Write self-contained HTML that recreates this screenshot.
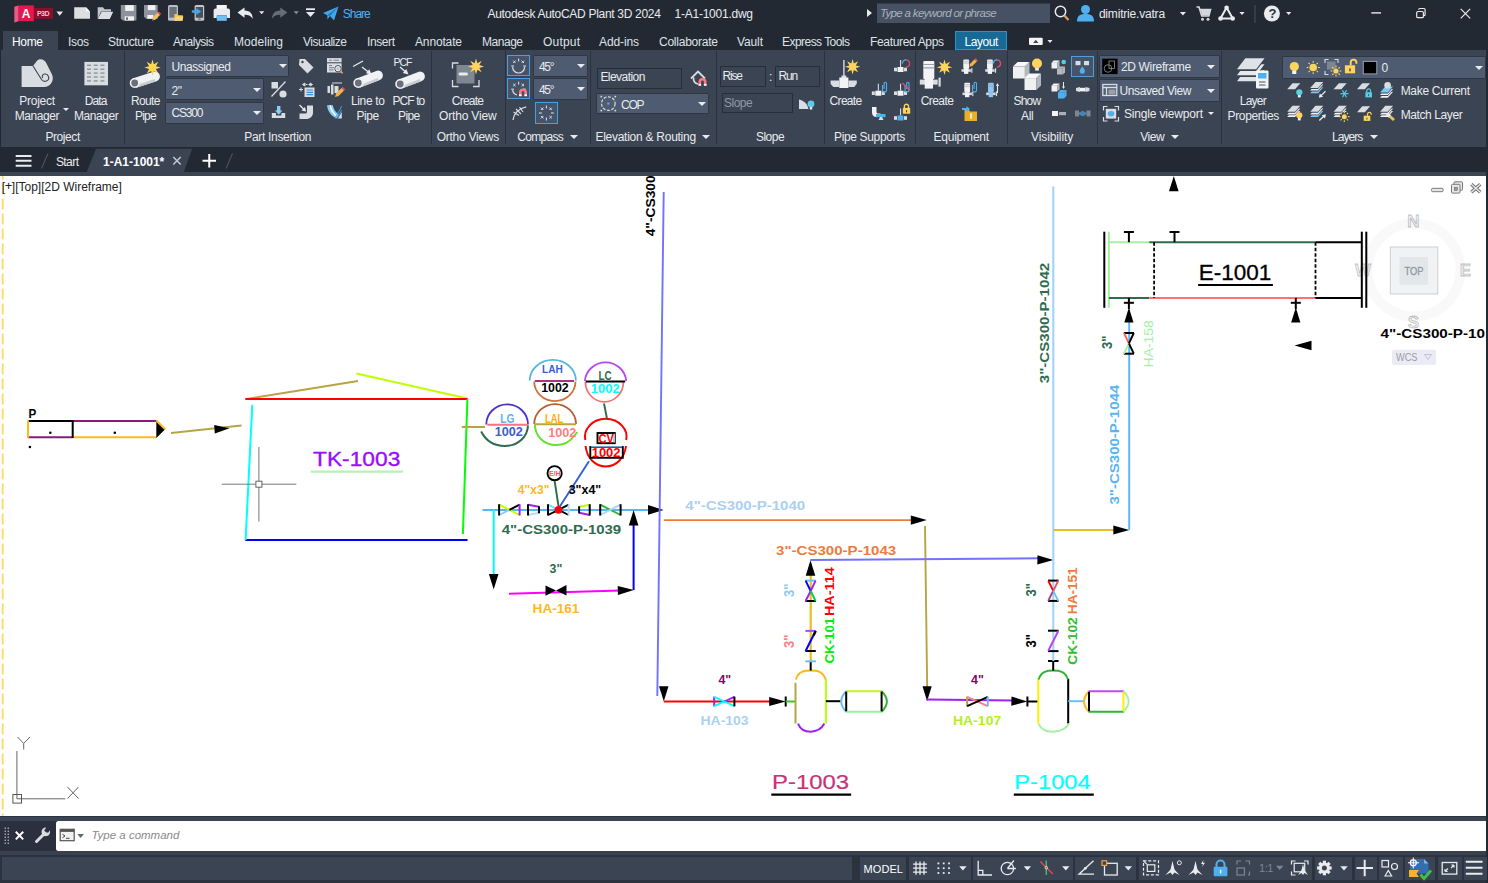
<!DOCTYPE html>
<html lang="en"><head><meta charset="utf-8"><title>Autodesk AutoCAD Plant 3D 2024 - 1-A1-1001.dwg</title>
<style>
*{box-sizing:border-box;margin:0;padding:0}
html,body{width:1488px;height:883px;overflow:hidden;background:#222933}
body{position:relative;font-family:"Liberation Sans",sans-serif;font-size:12px;color:#e9ebee}
.t{position:absolute;white-space:pre;line-height:1}
.a{position:absolute}
svg{position:absolute;overflow:visible}
.titlebar{left:0;top:0;width:1488px;height:30px;background:#222933}
.menubar{left:0;top:30px;width:1488px;height:20px;background:#222933}
.hometab{left:3px;top:31px;width:55px;height:20px;background:#3b4453}
.layouttab{left:955px;top:31px;width:52px;height:19px;background:#166a95;border:1px solid #2b93c8}
.ribbon{left:1px;top:50px;width:1485.300px;height:96.500px;background:#3b4453}
.sep{position:absolute;top:51px;width:1px;height:93px;background:#2a313d}
.dd{position:absolute;background:#4e5b71;border:1px solid #2f3744;border-radius:1px}
.inp{position:absolute;background:#3b4453;border:1px solid #272e39}
.tog{position:absolute;background:#46546a;border:1px solid #4b9fdc}
.arr{position:absolute;width:0;height:0;border-left:4px solid transparent;border-right:4px solid transparent;border-top:4.700px solid #e9ebee}
.arrs{position:absolute;width:0;height:0;border-left:3px solid transparent;border-right:3px solid transparent;border-top:3.5px solid #e9ebee}
.filetabs{left:0;top:146px;width:1488px;height:26px;background:#222933}
.band{left:0;top:172.300px;width:1486.400px;height:3.500px;background:#3b4453}
.canvas{left:0;top:176px;width:1486px;height:640px;background:#fff;overflow:hidden}
.below{left:0;top:816px;width:1486.400px;height:5px;background:#3b4453;border-top:1.500px solid #2b3340}
.cmdleft{left:0;top:820.500px;width:56px;height:30.700px;background:#2a303d}
.cmd{left:55.800px;top:821px;width:1430.600px;height:29.600px;background:#fff;border-radius:2.500px 0 0 2.500px}
.statusbg{left:0;top:851px;width:1486.400px;height:32px;background:#2c333f;border-top:4.500px solid #39414f}
.sb{position:absolute;top:857px;height:23.300px;background:#3b4453}

</style></head>
<body>
<div class="a titlebar">
<svg width="1488" height="30" viewBox="0 0 1488 30">
<path d="M18.500 5.400 H33.900 V21.200 H18.500Z" fill="#e5174d"/><path d="M14.300 6.800 L18.500 5.400 V21.200 L14.300 22.600Z" fill="#ea5a84"/>
<rect x="33.900" y="7.900" width="19.100" height="10.900" fill="#8a0f2d"/>
<path d="M59.700 15.700 l-3.300 -4.200 h6.600z" fill="#e9ebee"/>
<path d="M74.200 7.300 h11.800 l4 4.200 V18.800 H74.200Z" fill="#dcdee1"/><path d="M86 7.300 v4.200 h4Z" fill="#f4f5f6"/>
<path d="M97.700 7.200 h5.300 l1.500 2 h6.500 v2.300 H101 l-3.300 7.500Z" fill="#c3c7cd"/><path d="M101.600 11.800 H113.200 L109.800 19 H97.800Z" fill="#dcdee1"/>
<path d="M120.800 5.100 h15.600 V20.600 h-13.600 l-2 -2Z" fill="#8e939b"/><rect x="125.200" y="5.100" width="8.600" height="5.800" fill="#f1f2f4"/><rect x="124.700" y="16.300" width="9.300" height="4.300" fill="#f1f2f4"/><rect x="126" y="17.300" width="2" height="2.600" fill="#6b727d"/>
<path d="M144 5.100 h13.700 V18.800 h-11.700 l-2 -2Z" fill="#8e939b"/><rect x="147.800" y="5.100" width="7.600" height="5" fill="#f1f2f4"/><rect x="147.300" y="15" width="6" height="3.800" fill="#f1f2f4"/><path d="M152 20.600 l.9 -3.300 4.800 -4.800 2.400 2.400 -4.800 4.800z" fill="#f0c060"/><path d="M157.700 12.500 l1.100 -1.100 2.400 2.400 -1.100 1.100z" fill="#e8485c"/><path d="M152 20.600 l.5 -1.800 1.300 1.300z" fill="#555"/>
<rect x="168" y="5" width="10" height="15.800" rx="1.500" fill="#b9bdc4"/><rect x="169.300" y="7" width="7.400" height="10.600" fill="#6b717b"/><path d="M174.300 14 h3.200 l1 1.200 h4.300 v5.600 h-8.500z" fill="#f3c153"/><path d="M175.600 16.600 h7.800 l-1.200 4.200 h-7.900z" fill="#f7d37c"/>
<rect x="194.600" y="5" width="9.600" height="15.800" rx="1.500" fill="#c3c7cd"/><rect x="195.800" y="7" width="7.200" height="10.800" fill="#4a505b"/><rect x="198.200" y="18.600" width="2.400" height="1" fill="#4a505b"/><path d="M191.800 10.200 h4.700 v-2.200 l4.600 3.500 -4.600 3.500 v-2.200 h-4.700z" fill="#46a6ea"/>
<rect x="216.600" y="5" width="10.200" height="4.500" fill="#f4f5f6"/><path d="M213.600 10.500 a2 2 0 0 1 2 -2 h12.400 a2 2 0 0 1 2 2 v7.500 h-3.200 v-2.400 h-10 v2.400 h-3.200z" fill="#e9ebee"/><rect x="216.800" y="15.700" width="10" height="5.100" fill="#6cc0f5"/>
<path d="M237.5 12.5 l7 -5 v3 c6 0 8 3.500 8.300 8.500 c-2 -3.500 -4.500 -4.300 -8.300 -4.300 v3z" fill="#e9ebee"/>
<path d="M261.7 14.200 l-2.6 -3 h5.2z" fill="#e9ebee"/>
<path d="M287.3 12.5 l-7 -5 v3 c-6 0 -8 3.500 -8.300 8.500 c2 -3.500 4.500 -4.300 8.300 -4.300 v3z" fill="#656d79"/>
<path d="M296.2 14.200 l-2.6 -3 h5.2z" fill="#8b919b"/>
<rect x="306" y="8.3" width="9" height="1.800" fill="#e9ebee"/><path d="M310.500 17 l-4.500 -5 h9z" fill="#e9ebee"/>
<path d="M323 13 L338.500 6.500 L334 20.500 L330 16 L327.500 19.500 L327.300 15.200Z" fill="#3fa7ea"/><path d="M327.300 15.200 L338.500 6.500 L330 16Z" fill="#2278b4"/>
<path d="M867 9 v8 l5 -4z" fill="#e9ebee"/>
<rect x="877" y="3.500" width="173" height="19.500" fill="#465163"/>
<circle cx="1060.500" cy="11.500" r="5.200" fill="none" stroke="#e9ebee" stroke-width="1.500"/><path d="M1064.300 15.500 l4.200 4.500" stroke="#d9a066" stroke-width="2.200"/>
<circle cx="1085.500" cy="9.500" r="4.500" fill="#4fb0f0"/><path d="M1077 21.500 c0 -6.500 4 -7.500 8.500 -7.500 s8.500 1 8.500 7.500z" fill="#4fb0f0"/>
<path d="M1182.900 15.500 l-3 -3.500 h6z" fill="#e9ebee"/>
<path d="M1196.500 7 h2.500 l2.800 9 h7 l1.700 -6.500 h-10.500" fill="none" stroke="#d4d7dc" stroke-width="1.700"/><circle cx="1202.500" cy="19.300" r="1.500" fill="#d4d7dc"/><circle cx="1208" cy="19.300" r="1.500" fill="#d4d7dc"/><path d="M1200.700 10 h9.500 l-1.500 5.500 h-6.500z" fill="#d4d7dc"/>
<path d="M1226.600 7.500 L1220.500 18.500 H1232.700Z" fill="none" stroke="#e9ebee" stroke-width="2" stroke-linejoin="round"/><circle cx="1226.600" cy="7.800" r="2.300" fill="#e9ebee"/><circle cx="1220.500" cy="18.500" r="2.300" fill="#e9ebee"/><circle cx="1232.700" cy="18.500" r="2.300" fill="#e9ebee"/>
<path d="M1242 15 l-2.600 -3 h5.2z" fill="#e9ebee"/>
<rect x="1254.500" y="5" width="1" height="18" fill="#4a5361"/>
<circle cx="1271.900" cy="13.500" r="8" fill="#e9ebee"/>
<path d="M1288.700 15 l-2.600 -3 h5.2z" fill="#e9ebee"/>
<rect x="1371.300" y="12.200" width="9.700" height="1.400" fill="#e9ebee"/>
<rect x="1416.700" y="11.500" width="6.700" height="6.200" rx="1.300" fill="none" stroke="#e9ebee" stroke-width="1.200"/><path d="M1418.700 9.800 a1.300 1.300 0 0 1 1.300 -1.300 h3.800 a1.300 1.300 0 0 1 1.300 1.300 v4.600 a1.300 1.300 0 0 1 -1.300 1.300" fill="none" stroke="#e9ebee" stroke-width="1.200"/>
<path d="M1460.700 8.900 l9.500 9.500 M1470.200 8.900 l-9.500 9.500" stroke="#e9ebee" stroke-width="1.200"/>
</svg>
<span class="t" style="left:21.8px;top:7.9px;font-size:12px;color:#fff;font-weight:700;">A</span>
<span class="t" style="left:36.9px;top:10.1px;font-size:7px;color:#f0c4cf;font-weight:700;letter-spacing:-0.46px;">P3D</span>
<span class="t" style="left:342.7px;top:8.4px;font-size:12px;color:#4db0f0;letter-spacing:-0.98px;">Share</span>
<span class="t" style="left:487.5px;top:8.4px;font-size:12px;color:#e9ebee;letter-spacing:-0.30px;">Autodesk AutoCAD Plant 3D 2024</span>
<span class="t" style="left:674.5px;top:8.4px;font-size:12px;color:#e9ebee;letter-spacing:-0.24px;">1-A1-1001.dwg</span>
<span class="t" style="left:880.0px;top:7.9px;font-size:11.5px;color:#aab1bb;font-style:italic;letter-spacing:-0.67px;">Type a keyword or phrase</span>
<span class="t" style="left:1098.9px;top:8.4px;font-size:12px;color:#e9ebee;letter-spacing:-0.19px;">dimitrie.vatra</span>
<span class="t" style="left:1268.6px;top:7.2px;font-size:13px;color:#2a313c;font-weight:700;">?</span>
</div>
<div class="a menubar"></div><div class="a hometab"></div><div class="a layouttab"></div>
<span class="t" style="left:12.0px;top:36.0px;font-size:12px;color:#ffffff;letter-spacing:-0.34px;">Home</span>
<span class="t" style="left:68.0px;top:36.0px;font-size:12px;color:#dfe2e6;letter-spacing:-0.34px;">Isos</span>
<span class="t" style="left:108.0px;top:36.0px;font-size:12px;color:#dfe2e6;letter-spacing:-0.34px;">Structure</span>
<span class="t" style="left:173.0px;top:36.0px;font-size:12px;color:#dfe2e6;letter-spacing:-0.53px;">Analysis</span>
<span class="t" style="left:234.0px;top:36.0px;font-size:12px;color:#dfe2e6;letter-spacing:0.04px;">Modeling</span>
<span class="t" style="left:303.0px;top:36.0px;font-size:12px;color:#dfe2e6;letter-spacing:-0.48px;">Visualize</span>
<span class="t" style="left:367.0px;top:36.0px;font-size:12px;color:#dfe2e6;letter-spacing:-0.40px;">Insert</span>
<span class="t" style="left:415.0px;top:36.0px;font-size:12px;color:#dfe2e6;letter-spacing:-0.15px;">Annotate</span>
<span class="t" style="left:482.0px;top:36.0px;font-size:12px;color:#dfe2e6;letter-spacing:-0.47px;">Manage</span>
<span class="t" style="left:543.0px;top:36.0px;font-size:12px;color:#dfe2e6;letter-spacing:0.19px;">Output</span>
<span class="t" style="left:599.0px;top:36.0px;font-size:12px;color:#dfe2e6;letter-spacing:-0.11px;">Add-ins</span>
<span class="t" style="left:659.0px;top:36.0px;font-size:12px;color:#dfe2e6;letter-spacing:-0.24px;">Collaborate</span>
<span class="t" style="left:737.0px;top:36.0px;font-size:12px;color:#dfe2e6;letter-spacing:-0.12px;">Vault</span>
<span class="t" style="left:782.0px;top:36.0px;font-size:12px;color:#dfe2e6;letter-spacing:-0.54px;">Express Tools</span>
<span class="t" style="left:870.0px;top:36.0px;font-size:12px;color:#dfe2e6;letter-spacing:-0.34px;">Featured Apps</span>
<span class="t" style="left:964.4px;top:36.0px;font-size:12px;color:#ffffff;letter-spacing:-0.41px;">Layout</span>
<svg width="1488" height="60" viewBox="0 0 1488 60" style="left:0;top:0"><rect x="1029" y="37.800" width="13.700" height="7.200" rx="1" fill="#f4f5f6"/><path d="M1035.800 39.800 l2.600 3.200 h-5.200z" fill="#3b4453"/><path d="M1050 43 l-2.500 -3 h5z" fill="#e9ebee"/></svg>
<div class="a filetabs"></div><div class="a band"></div>
<svg width="1488" height="180" viewBox="0 0 1488 180" style="left:0;top:0">
<path d="M86.500 172.500 L96.100 148.700 H192.200 L183.500 172.500Z" fill="#3b4453"/>
<path d="M15.700 155.900 h15.800 M15.700 160.800 h15.800 M15.700 165.700 h15.800" stroke="#e9ebee" stroke-width="2"/>
<path d="M41.500 168.500 l6.500 -15 M226 168.500 l6.500 -15" stroke="#4a5260" stroke-width="1.200"/>
<path d="M173.300 157 l7.400 7.600 M180.700 157 l-7.400 7.600" stroke="#c3c8cf" stroke-width="1.500"/>
<path d="M202.500 160.700 h13.500 M209.250 154 v13.500" stroke="#ffffff" stroke-width="2"/>
</svg>
<span class="t" style="left:55.9px;top:155.6px;font-size:12px;color:#e9ebee;letter-spacing:-0.56px;">Start</span>
<span class="t" style="left:103.1px;top:155.6px;font-size:12px;color:#ffffff;font-weight:700;letter-spacing:-0.02px;">1-A1-1001*</span><div class="a ribbon"></div>
<i class="sep" style="left:123.8px"></i>
<i class="sep" style="left:431.1px"></i>
<i class="sep" style="left:504.5px"></i>
<i class="sep" style="left:589.8px"></i>
<i class="sep" style="left:716.0px"></i>
<i class="sep" style="left:824.0px"></i>
<i class="sep" style="left:914.7px"></i>
<i class="sep" style="left:1007.3px"></i>
<i class="sep" style="left:1096.6px"></i>
<i class="sep" style="left:1221.2px"></i>
<div class="dd" style="left:165.0px;top:55.0px;width:124.0px;height:22.0px"></div>
<div class="dd" style="left:165.0px;top:78.0px;width:99.0px;height:22.0px"></div>
<div class="dd" style="left:165.0px;top:102.0px;width:99.0px;height:22.0px"></div>
<div class="tog" style="left:507.3px;top:55.0px;width:22.5px;height:20.8px"></div>
<div class="tog" style="left:507.3px;top:78.2px;width:22.5px;height:21.2px"></div>
<div class="tog" style="left:534.5px;top:102.4px;width:23.2px;height:21.2px"></div>
<div class="dd" style="left:533.0px;top:55.0px;width:55.0px;height:22.0px"></div>
<div class="dd" style="left:533.0px;top:78.0px;width:55.0px;height:22.0px"></div>
<div class="inp" style="left:597.4px;top:68.0px;width:84.7px;height:21.0px"></div>
<div class="dd" style="left:596.0px;top:93.0px;width:113.0px;height:21.0px"></div>
<div class="inp" style="left:719.5px;top:66.1px;width:46.3px;height:20.6px"></div>
<div class="inp" style="left:775.1px;top:66.1px;width:44.8px;height:20.6px"></div>
<div class="inp" style="left:721.5px;top:93.3px;width:71.2px;height:20.2px"></div>
<div class="tog" style="left:1070.9px;top:55.9px;width:23.2px;height:21.5px"></div>
<div class="dd" style="left:1099.0px;top:55.0px;width:121.0px;height:23.0px"></div>
<div class="dd" style="left:1099.0px;top:79.0px;width:121.0px;height:23.0px"></div>
<div class="dd" style="left:1282.0px;top:56.0px;width:204.0px;height:23.0px"></div>
<i class="arr" style="left:278.5px;top:64.2px"></i>
<i class="arr" style="left:252.8px;top:87.6px"></i>
<i class="arr" style="left:252.8px;top:111.0px"></i>
<i class="arr" style="left:577.3px;top:63.9px"></i>
<i class="arr" style="left:577.3px;top:87.2px"></i>
<i class="arr" style="left:698.2px;top:101.8px"></i>
<i class="arr" style="left:1207.4px;top:64.6px"></i>
<i class="arr" style="left:1207.4px;top:88.5px"></i>
<i class="arr" style="left:1474.7px;top:65.6px"></i>
<i class="arrs" style="left:62.5px;top:107.5px"></i>
<i class="arrs" style="left:1207.5px;top:111.5px"></i>
<i class="arr" style="left:569.8px;top:134.5px"></i>
<i class="arr" style="left:702.3px;top:134.5px"></i>
<i class="arr" style="left:1170.7px;top:134.5px"></i>
<i class="arr" style="left:1369.7px;top:134.5px"></i>
<span class="t" style="left:19.3px;top:94.6px;font-size:12px;color:#e9ebee;letter-spacing:-0.28px;">Project</span>
<span class="t" style="left:14.8px;top:110.3px;font-size:12px;color:#e9ebee;letter-spacing:-0.43px;">Manager</span>
<span class="t" style="left:84.8px;top:94.6px;font-size:12px;color:#e9ebee;letter-spacing:-0.89px;">Data</span>
<span class="t" style="left:74.0px;top:110.3px;font-size:12px;color:#e9ebee;letter-spacing:-0.43px;">Manager</span>
<span class="t" style="left:131.0px;top:94.6px;font-size:12px;color:#e9ebee;letter-spacing:-0.66px;">Route</span>
<span class="t" style="left:135.0px;top:110.3px;font-size:12px;color:#e9ebee;letter-spacing:-0.81px;">Pipe</span>
<span class="t" style="left:351.0px;top:94.6px;font-size:12px;color:#e9ebee;letter-spacing:-0.36px;">Line to</span>
<span class="t" style="left:356.6px;top:110.3px;font-size:12px;color:#e9ebee;letter-spacing:-0.48px;">Pipe</span>
<span class="t" style="left:392.4px;top:94.6px;font-size:12px;color:#e9ebee;letter-spacing:-0.89px;">PCF to</span>
<span class="t" style="left:398.0px;top:110.3px;font-size:12px;color:#e9ebee;letter-spacing:-0.58px;">Pipe</span>
<span class="t" style="left:451.8px;top:94.6px;font-size:12px;color:#e9ebee;letter-spacing:-0.77px;">Create</span>
<span class="t" style="left:439.1px;top:110.3px;font-size:12px;color:#e9ebee;letter-spacing:-0.18px;">Ortho View</span>
<span class="t" style="left:829.6px;top:94.6px;font-size:12px;color:#e9ebee;letter-spacing:-0.69px;">Create</span>
<span class="t" style="left:920.7px;top:94.6px;font-size:12px;color:#e9ebee;letter-spacing:-0.55px;">Create</span>
<span class="t" style="left:1013.4px;top:94.6px;font-size:12px;color:#e9ebee;letter-spacing:-0.74px;">Show</span>
<span class="t" style="left:1021.0px;top:110.3px;font-size:12px;color:#e9ebee;letter-spacing:-0.37px;">All</span>
<span class="t" style="left:1239.8px;top:94.6px;font-size:12px;color:#e9ebee;letter-spacing:-0.78px;">Layer</span>
<span class="t" style="left:1227.5px;top:110.3px;font-size:12px;color:#e9ebee;letter-spacing:-0.33px;">Properties</span>
<span class="t" style="left:45.4px;top:131.3px;font-size:12px;color:#e9ebee;letter-spacing:-0.41px;">Project</span>
<span class="t" style="left:244.3px;top:131.3px;font-size:12px;color:#e9ebee;letter-spacing:-0.32px;">Part Insertion</span>
<span class="t" style="left:436.7px;top:131.3px;font-size:12px;color:#e9ebee;letter-spacing:-0.26px;">Ortho Views</span>
<span class="t" style="left:517.3px;top:131.3px;font-size:12px;color:#e9ebee;letter-spacing:-0.71px;">Compass</span>
<span class="t" style="left:595.4px;top:131.3px;font-size:12px;color:#e9ebee;letter-spacing:-0.26px;">Elevation &amp; Routing</span>
<span class="t" style="left:756.0px;top:131.3px;font-size:12px;color:#e9ebee;letter-spacing:-0.53px;">Slope</span>
<span class="t" style="left:834.0px;top:131.3px;font-size:12px;color:#e9ebee;letter-spacing:-0.35px;">Pipe Supports</span>
<span class="t" style="left:933.4px;top:131.3px;font-size:12px;color:#e9ebee;letter-spacing:-0.20px;">Equipment</span>
<span class="t" style="left:1031.1px;top:131.3px;font-size:12px;color:#e9ebee;letter-spacing:-0.12px;">Visibility</span>
<span class="t" style="left:1140.3px;top:131.3px;font-size:12px;color:#e9ebee;letter-spacing:-0.50px;">View</span>
<span class="t" style="left:1331.9px;top:131.3px;font-size:12px;color:#e9ebee;letter-spacing:-0.93px;">Layers</span>
<span class="t" style="left:171.4px;top:60.8px;font-size:12px;color:#e9ebee;letter-spacing:-0.42px;">Unassigned</span>
<span class="t" style="left:171.5px;top:84.5px;font-size:12px;color:#e9ebee;letter-spacing:-0.44px;">2"</span>
<span class="t" style="left:171.4px;top:107.4px;font-size:12px;color:#e9ebee;letter-spacing:-1.15px;">CS300</span>
<span class="t" style="left:538.9px;top:61.2px;font-size:12px;color:#e9ebee;letter-spacing:-1.20px;">45°</span>
<span class="t" style="left:538.9px;top:84.2px;font-size:12px;color:#e9ebee;letter-spacing:-1.20px;">45°</span>
<span class="t" style="left:600.4px;top:71.3px;font-size:12px;color:#e9ebee;letter-spacing:-0.55px;">Elevation</span>
<span class="t" style="left:621.0px;top:98.5px;font-size:12px;color:#e9ebee;letter-spacing:-1.20px;">COP</span>
<span class="t" style="left:722.5px;top:69.8px;font-size:12px;color:#e9ebee;letter-spacing:-1.20px;">Rise</span>
<span class="t" style="left:769.0px;top:70.8px;font-size:12px;color:#e9ebee;">:</span>
<span class="t" style="left:778.5px;top:69.8px;font-size:12px;color:#e9ebee;letter-spacing:-1.20px;">Run</span>
<span class="t" style="left:724.1px;top:96.9px;font-size:12px;color:#8f98a5;letter-spacing:-0.53px;">Slope</span>
<span class="t" style="left:1121.0px;top:61.1px;font-size:12px;color:#e9ebee;letter-spacing:-0.35px;">2D Wireframe</span>
<span class="t" style="left:1119.6px;top:84.8px;font-size:12px;color:#e9ebee;letter-spacing:-0.42px;">Unsaved View</span>
<span class="t" style="left:1124.0px;top:108.3px;font-size:12px;color:#e9ebee;letter-spacing:-0.17px;">Single viewport</span>
<span class="t" style="left:1381.6px;top:62.2px;font-size:12px;color:#e9ebee;">0</span>
<span class="t" style="left:1400.7px;top:85.3px;font-size:12px;color:#e9ebee;letter-spacing:-0.31px;">Make Current</span>
<span class="t" style="left:1400.7px;top:108.9px;font-size:12px;color:#e9ebee;letter-spacing:-0.40px;">Match Layer</span>
<span class="t" style="left:393.5px;top:56.7px;font-size:10.5px;color:#e9ebee;letter-spacing:-1.00px;">PCF</span>
<svg width="1488" height="150" viewBox="0 0 1488 150" style="left:0;top:0">
<path d="M21.600 66 H33 L37 60.800 C41 57.500 45 60.500 46.500 63.500 L52 74.500 C54.500 80 51 87 44 87 H21.600Z" fill="#d9dce0"/>
<path d="M33 66 L41.500 79.500 C44 83 50 81 48.500 76.500 C47 72.500 41 73.500 42.500 78" fill="none" stroke="#3b4453" stroke-width="1.100"/>
<rect x="84.400" y="61.900" width="23.600" height="23.400" fill="#d9dce0"/>
<rect x="87.0" y="64.6" width="4" height="1.400" fill="#8e959f"/>
<rect x="93.7" y="64.6" width="4" height="1.400" fill="#8e959f"/>
<rect x="100.4" y="64.6" width="4" height="1.400" fill="#8e959f"/>
<rect x="87.0" y="68.5" width="4" height="1.400" fill="#8e959f"/>
<rect x="93.7" y="68.5" width="4" height="1.400" fill="#8e959f"/>
<rect x="100.4" y="68.5" width="4" height="1.400" fill="#8e959f"/>
<rect x="87.0" y="72.4" width="4" height="1.400" fill="#8e959f"/>
<rect x="93.7" y="72.4" width="4" height="1.400" fill="#8e959f"/>
<rect x="100.4" y="72.4" width="4" height="1.400" fill="#8e959f"/>
<rect x="87.0" y="76.3" width="4" height="1.400" fill="#8e959f"/>
<rect x="93.7" y="76.3" width="4" height="1.400" fill="#8e959f"/>
<rect x="100.4" y="76.3" width="4" height="1.400" fill="#8e959f"/>
<rect x="87.0" y="80.2" width="4" height="1.400" fill="#8e959f"/>
<rect x="93.7" y="80.2" width="4" height="1.400" fill="#8e959f"/>
<rect x="100.4" y="80.2" width="4" height="1.400" fill="#8e959f"/>
<path d="M133.2 78.3 L153.5 71.8 A4.9 4.9 0 0 1 156.5 81.2 L136.2 87.7 Z" fill="#f1f2f4"/><path d="M136.2 87.7 L155.5 81.5 L154.8 79.1 L135.4 85.3 Z" fill="#c9cdd3"/><circle cx="134.7" cy="83.0" r="4.2" fill="#6a6f78" stroke="#f1f2f4" stroke-width="1.600"/>
<polygon points="152.5,59.4 153.9,64.2 158.3,61.8 155.9,66.2 160.7,67.6 155.9,69.0 158.3,73.4 153.9,71.0 152.5,75.8 151.1,71.0 146.7,73.4 149.1,69.0 144.3,67.6 149.1,66.2 146.7,61.8 151.1,64.2" fill="#ffd45e"/>
<path d="M356.6 78.4 L376.3 70.9 A4.9 4.9 0 0 1 379.7 80.1 L360.0 87.6 Z" fill="#f1f2f4"/><path d="M360.0 87.6 L378.8 80.4 L377.9 78.1 L359.2 85.3 Z" fill="#c9cdd3"/><circle cx="358.3" cy="83.0" r="4.2" fill="#6a6f78" stroke="#f1f2f4" stroke-width="1.600"/>
<path d="M353 66.500 l10 -5.500" stroke="#e9ebee" stroke-width="1.300"/><path d="M362 67 l7 5.500" stroke="#e9ebee" stroke-width="1.300"/><path d="M371.500 74.500 l-5.500 -1.200 3.300 -4z" fill="#e9ebee"/>
<path d="M398.5 79.4 L418.3 71.9 A4.9 4.9 0 0 1 421.7 81.1 L401.9 88.6 Z" fill="#f1f2f4"/><path d="M401.9 88.6 L420.8 81.4 L419.9 79.1 L401.1 86.3 Z" fill="#c9cdd3"/><circle cx="400.2" cy="84.0" r="4.2" fill="#6a6f78" stroke="#f1f2f4" stroke-width="1.600"/>
<path d="M400 67 l5 4.500" stroke="#e9ebee" stroke-width="1.300"/><path d="M408.500 74.500 l-5.700 -1.400 3.500 -4z" fill="#e9ebee"/>
<rect x="271.500" y="82" width="6.500" height="6.500" fill="#d9dce0"/><circle cx="283" cy="94" r="3.600" fill="#d9dce0"/><path d="M271.500 96.500 L285.500 81.500" stroke="#d9dce0" stroke-width="1.300"/>
<path d="M271.800 113 h4.200 v2.500 h5.400 v-2.500 h3.800 v5 h-13.400z" fill="#d9dce0"/><path d="M277 106 h3.400 v4.500 h2 l-3.700 4.300 -3.700 -4.300 h2z" fill="#8ccdf8"/>
<path d="M299.500 59 h5.500 l8.500 8.500 -6 6 -8.500 -8.500z" fill="#d9dce0"/><circle cx="302.500" cy="62" r="1.200" fill="#3b4453"/>
<rect x="304.500" y="87.500" width="10" height="9.500" fill="#d9dce0"/><path d="M306.500 90 h6.500 M306.500 92.300 h6.500 M306.500 94.600 h6.500" stroke="#3b8fd0" stroke-width="1.200"/><path d="M299 89.500 h4 M301 87.500 v4 M302.500 84.500 l2.500 -1.500 v3z M312.500 84.500 l-2.500 -1.500 v3z M306 84.500 h1.500 M308.500 84.500 h1.500" stroke="#d9dce0" stroke-width="1" fill="#d9dce0"/>
<path d="M307 105.500 h6 v7 c0 4 -3 6.500 -7 6.500 h-6.500 v-5.500 h5.500 c1.500 0 2 -.5 2 -2z" fill="#d9dce0"/><path d="M299.500 105 l4.500 4.500" stroke="#e9ebee" stroke-width="1.200"/><path d="M306 111.500 l-4.500 -1 3.500 -3.500z" fill="#e9ebee"/>
<rect x="327" y="58.100" width="14.600" height="4.200" fill="#d9dce0"/><rect x="327" y="63.300" width="14.600" height="9.200" fill="#d9dce0"/><path d="M329 60.200 h3 M333.500 60.200 h5.500 M329 65.500 h3 M329 67.700 h5 M329 69.900 h4.500" stroke="#7b828d" stroke-width="1"/><circle cx="338" cy="68.700" r="3.100" fill="#c3c7cd" stroke="#3b4453" stroke-width="1"/><circle cx="338" cy="68.700" r="2.200" fill="none" stroke="#e9ebee" stroke-width="1"/><path d="M340.300 71 l2.400 2.400" stroke="#d9a066" stroke-width="1.500"/>
<rect x="327.500" y="86" width="2.500" height="7" fill="#d9dce0"/><rect x="331" y="84.500" width="2.500" height="10" fill="#d9dce0"/><rect x="334.500" y="86" width="4" height="7" fill="#d9dce0"/><path d="M332 83 h10" stroke="#d9dce0" stroke-width="1"/><path d="M335 97 l1 -3.500 5.500 -5.500 2.500 2.500 -5.500 5.500z" fill="#f0b545"/><path d="M341.500 88 l1.200 -1.200 2.500 2.500 -1.200 1.200z" fill="#e0526a"/>
<path d="M327 105.200 h5.800 c.6 4 2.600 7 6 9 l-2.400 4.200 c-5.400 -2.600 -8.800 -7.400 -9.400 -13.200z" fill="#8ccdf8"/><path d="M330.300 105.200 c.6 5 3.100 8.800 7 11" fill="none" stroke="#fff" stroke-width="1.300"/><path d="M338 118.500 l3.800 -6.500 v6.500z" fill="#d9dce0"/><path d="M335.200 118.600 l6.500 -12.500 M337.200 118.600 l4.500 -8.500" stroke="#3fa0e8" stroke-width="1"/>
<rect x="456.500" y="65" width="18" height="18.500" fill="#7f8791"/><rect x="458.500" y="72.500" width="9.500" height="3" rx="1.500" fill="#e9ebee"/>
<path d="M452.500 68.500 v-5.500 h6 M452.500 80 v6.500 h6 M479 80 v6.500 h-6" fill="none" stroke="#d9dce0" stroke-width="1.300"/>
<polygon points="476.0,58.5 477.4,63.2 481.7,60.8 479.3,65.1 484.0,66.5 479.3,67.9 481.7,72.2 477.4,69.8 476.0,74.5 474.6,69.8 470.3,72.2 472.7,67.9 468.0,66.5 472.7,65.1 470.3,60.8 474.6,63.2" fill="#ffd45e"/>
<path d="M523.2 66.0 L526.0 66.0" stroke="#d9dce0" stroke-width="1.100"/><path d="M521.6 60.6 l2.400 2.400 M524.0 60.6 l-2.400 2.400" stroke="#d9dce0" stroke-width="1"/><path d="M518.6 61.4 L518.6 58.6" stroke="#d9dce0" stroke-width="1.100"/><path d="M513.2 60.6 l2.400 2.400 M515.6 60.6 l-2.400 2.400" stroke="#d9dce0" stroke-width="1"/><path d="M514.0 66.0 L511.2 66.0" stroke="#d9dce0" stroke-width="1.100"/><path d="M512.600 67 A6 6 0 0 0 524.600 67" fill="none" stroke="#d9dce0" stroke-width="1.200"/>
<path d="M523.2 89.2 L526.0 89.2" stroke="#d9dce0" stroke-width="1.100"/><path d="M521.6 83.8 l2.400 2.400 M524.0 83.8 l-2.400 2.400" stroke="#d9dce0" stroke-width="1"/><path d="M518.6 84.6 L518.6 81.8" stroke="#d9dce0" stroke-width="1.100"/><path d="M513.2 83.8 l2.400 2.400 M515.6 83.8 l-2.400 2.400" stroke="#d9dce0" stroke-width="1"/><path d="M514.0 89.2 L511.2 89.2" stroke="#d9dce0" stroke-width="1.100"/><path d="M512.600 90.200 A6 6 0 0 0 517 95" fill="none" stroke="#d9dce0" stroke-width="1.200"/>
<path d="M551.0 113.0 L553.8 113.0" stroke="#d9dce0" stroke-width="1.100"/><path d="M549.4 107.6 l2.400 2.400 M551.8 107.6 l-2.400 2.400" stroke="#d9dce0" stroke-width="1"/><path d="M546.4 108.4 L546.4 105.6" stroke="#d9dce0" stroke-width="1.100"/><path d="M541.0 107.6 l2.400 2.400 M543.4 107.6 l-2.400 2.400" stroke="#d9dce0" stroke-width="1"/><path d="M541.8 113.0 L539.0 113.0" stroke="#d9dce0" stroke-width="1.100"/><path d="M541.0 116.0 l2.400 2.400 M543.4 116.0 l-2.400 2.400" stroke="#d9dce0" stroke-width="1"/><path d="M546.4 117.6 L546.4 120.4" stroke="#d9dce0" stroke-width="1.100"/><path d="M549.4 116.0 l2.400 2.400 M551.8 116.0 l-2.400 2.400" stroke="#d9dce0" stroke-width="1"/>
<path d="M519.0 96.0 v-3.500 a4 4 0 0 1 8 0 v3.500 h-2.600 v-3.500 a1.400 1.400 0 0 0 -2.800 0 v3.500z" fill="#ff7a80"/><rect x="519.0" y="94.4" width="2.600" height="1.800" fill="#fff"/><rect x="524.4" y="94.4" width="2.600" height="1.800" fill="#fff"/>
<path d="M513 120 c1 -7 6 -11.500 13.200 -13.200" stroke="#d9dce0" stroke-width="1.300" fill="none"/><path d="M513.500 112 l5.500 3.500 M516 109 l5 5 M519.500 107 l3.500 5" stroke="#d9dce0" stroke-width="1.100"/>
<path d="M691 78.500 l7 -7 7 7" fill="none" stroke="#d9dce0" stroke-width="1.800"/><path d="M693.800 77.500 a5 5 0 0 0 4.200 6.500" fill="none" stroke="#d9dce0" stroke-width="1.700"/>
<path d="M698.5 85.5 v-3.500 a4 4 0 0 1 8 0 v3.500 h-2.600 v-3.500 a1.400 1.400 0 0 0 -2.800 0 v3.500z" fill="#ff7a80"/><rect x="698.5" y="83.9" width="2.600" height="1.800" fill="#fff"/><rect x="703.9" y="83.9" width="2.600" height="1.800" fill="#fff"/>
<circle cx="608.300" cy="103.600" r="6.800" fill="none" stroke="#d9dce0" stroke-width="1.200" stroke-dasharray="3 1.500"/><circle cx="608.300" cy="103.600" r="1.200" fill="#4fb0f0"/>
<rect x="600.5" y="95.8" width="1.600" height="1.600" fill="#d9dce0"/>
<rect x="600.5" y="109.8" width="1.600" height="1.600" fill="#d9dce0"/>
<rect x="614.5" y="95.8" width="1.600" height="1.600" fill="#d9dce0"/>
<rect x="614.5" y="109.8" width="1.600" height="1.600" fill="#d9dce0"/>
<path d="M799 109 v-9.500 c5 1 8.500 4.500 9.500 9.500z" fill="#d9dce0"/><circle cx="811" cy="104" r="3.400" fill="#5ccbe6"/><rect x="809.800" y="107" width="2.400" height="2.500" fill="#e9ebee"/>
<rect x="843.200" y="60" width="1.400" height="16" fill="#d9dce0"/>
<rect x="841.500" y="75.500" width="4.800" height="2.500" fill="#d9dce0"/><rect x="839.300" y="77.500" width="9.100" height="10.500" fill="#f2f3f5"/><path d="M830.600 80.500 h8.700 v6.500 h-6 l-2.700 -3z" fill="#d9dce0"/><path d="M848.400 80.500 h8.400 v3 l-2.500 3.500 h-5.900z" fill="#d9dce0"/>
<polygon points="852.6,59.0 853.9,63.6 858.1,61.3 855.8,65.5 860.4,66.8 855.8,68.1 858.1,72.3 853.9,70.0 852.6,74.6 851.3,70.0 847.1,72.3 849.4,68.1 844.8,66.8 849.4,65.5 847.1,61.3 851.3,63.6" fill="#ffd45e"/>
<rect x="900.0" y="60.0" width="1.100" height="7" fill="#d9dce0"/><rect x="897.5" y="67.0" width="6" height="5" fill="#f2f3f5"/><rect x="894.0" y="67.7" width="3" height="3.600" fill="#d9dce0"/><rect x="904.0" y="67.7" width="3" height="3.600" fill="#d9dce0"/>
<path d="M902.4 63.5 a3.600 3.600 0 0 1 3.600 -3.600" fill="none" stroke="#4fb0f0" stroke-width="1.400"/><path d="M909.6 63.5 a3.600 3.600 0 0 1 -3.600 3.600" fill="none" stroke="#e0526a" stroke-width="1.400"/><path d="M906.0 59.9 a3.600 3.600 0 0 1 3.600 3.600" fill="none" stroke="#e0526a" stroke-width="1.400"/>
<rect x="877.8" y="83.7" width="1.100" height="7" fill="#d9dce0"/><rect x="875.3" y="90.7" width="6" height="5" fill="#f2f3f5"/><rect x="871.8" y="91.4" width="3" height="3.600" fill="#d9dce0"/><rect x="881.8" y="91.4" width="3" height="3.600" fill="#d9dce0"/>
<path d="M882.5 85.0 v5 a2 2 0 0 0 4 0 v-6.500 a1.200 1.200 0 0 0 -2.400 0 v5.500" fill="none" stroke="#4fb0f0" stroke-width="1.100"/>
<rect x="900.0" y="83.7" width="1.100" height="7" fill="#d9dce0"/><rect x="897.5" y="90.7" width="6" height="5" fill="#f2f3f5"/><rect x="894.0" y="91.4" width="3" height="3.600" fill="#d9dce0"/><rect x="904.0" y="91.4" width="3" height="3.600" fill="#d9dce0"/>
<path d="M905.0 85.0 v5 a2 2 0 0 0 4 0 v-6.500 a1.200 1.200 0 0 0 -2.400 0 v5.500" fill="none" stroke="#4fb0f0" stroke-width="1.100"/>
<path d="M902.500 83 l7.500 7.500" stroke="#e0526a" stroke-width="1.300"/>
<path d="M872 107 h4.500 v4.500 c0 1.500 .5 2 2 2 h2 v3.500 h-4 c-3 0 -4.500 -2 -4.500 -4.500z" fill="#f2f3f5"/><rect x="876" y="114" width="9.500" height="3.200" fill="#4fb0f0"/><path d="M878.500 120 l1.500 -3 h2 l1.500 3z" fill="#d9dce0"/>
<rect x="900.0" y="108.5" width="1.100" height="7" fill="#d9dce0"/><rect x="897.5" y="115.5" width="6" height="5" fill="#4fb0f0"/><rect x="894.0" y="116.2" width="3" height="3.600" fill="#d9dce0"/><rect x="904.0" y="116.2" width="3" height="3.600" fill="#d9dce0"/>
<path d="M904.4 107.9 v-2.0 a2.1 2.1 0 0 1 4.1 0 v2.0" fill="none" stroke="#ffd45e" stroke-width="1.4"/><rect x="902.8" y="107.9" width="7.4" height="5.8" fill="#ffd45e"/><rect x="906.0" y="110.2" width="1.1" height="2.1" fill="#3b4453"/>
<rect x="923.3" y="61" width="11.0" height="17.9" rx="1" fill="#f2f3f5"/><path d="M923.3 64.5 h11.0 M923.3 67.9 h11.0" stroke="#9aa1ab" stroke-width="1.1"/><rect x="919.8" y="79.6" width="17.9" height="5.0" fill="#d9dce0"/><rect x="924.7" y="78.9" width="8.3" height="9.7" fill="#f2f3f5"/><rect x="938.5" y="77.6" width="2.2" height="9.0" fill="#d9dce0"/>
<polygon points="944.5,59.4 945.8,64.0 950.0,61.7 947.7,65.9 952.3,67.2 947.7,68.5 950.0,72.7 945.8,70.4 944.5,75.0 943.2,70.4 939.0,72.7 941.3,68.5 936.7,67.2 941.3,65.9 939.0,61.7 943.2,64.0" fill="#ffd45e"/>
<rect x="963.3" y="59.5" width="5.8" height="9.4" rx="1" fill="#f2f3f5"/><path d="M963.3 61.3 h5.8 M963.3 63.1 h5.8" stroke="#9aa1ab" stroke-width="0.6"/><rect x="961.5" y="69.2" width="9.4" height="2.6" fill="#d9dce0"/><rect x="964.0" y="68.9" width="4.3" height="5.0" fill="#f2f3f5"/><rect x="971.2" y="68.1" width="1.2" height="4.7" fill="#d9dce0"/>
<path d="M969.300 66.800 l.8 -3 4.500 -4.500 2.200 2.200 -4.500 4.500z" fill="#f0b545"/><path d="M974.600 59.300 l1.100 -1.100 2.200 2.200 -1.100 1.100z" fill="#e0526a"/>
<rect x="987" y="59.5" width="5.8" height="9.4" rx="1" fill="#f2f3f5"/><path d="M987 61.3 h5.8 M987 63.1 h5.8" stroke="#9aa1ab" stroke-width="0.6"/><rect x="985.2" y="69.2" width="9.4" height="2.6" fill="#d9dce0"/><rect x="987.7" y="68.9" width="4.3" height="5.0" fill="#f2f3f5"/><rect x="994.9" y="68.1" width="1.2" height="4.7" fill="#d9dce0"/>
<path d="M993.4 63.5 a3.600 3.600 0 0 1 3.600 -3.600" fill="none" stroke="#4fb0f0" stroke-width="1.400"/><path d="M1000.6 63.5 a3.600 3.600 0 0 1 -3.600 3.600" fill="none" stroke="#e0526a" stroke-width="1.400"/><path d="M997.0 59.9 a3.600 3.600 0 0 1 3.600 3.600" fill="none" stroke="#e0526a" stroke-width="1.400"/>
<rect x="964.3" y="82.8" width="5.8" height="9.4" rx="1" fill="#f2f3f5"/><path d="M964.3 84.6 h5.8 M964.3 86.4 h5.8" stroke="#9aa1ab" stroke-width="0.6"/><rect x="962.5" y="92.5" width="9.4" height="2.6" fill="#d9dce0"/><rect x="965.0" y="92.2" width="4.3" height="5.0" fill="#f2f3f5"/><rect x="972.2" y="91.4" width="1.2" height="4.7" fill="#d9dce0"/>
<path d="M972.5 85.0 v5 a2 2 0 0 0 4 0 v-6.500 a1.200 1.200 0 0 0 -2.400 0 v5.500" fill="none" stroke="#4fb0f0" stroke-width="1.100"/>
<rect x="988" y="82.8" width="5.8" height="9.4" rx="1" fill="#8cc8f4"/><path d="M988 84.6 h5.8 M988 86.4 h5.8" stroke="#9aa1ab" stroke-width="0.6"/><rect x="986.2" y="92.5" width="9.4" height="2.6" fill="#d9dce0"/><rect x="988.7" y="92.2" width="4.3" height="5.0" fill="#8cc8f4"/><rect x="995.9" y="91.4" width="1.2" height="4.7" fill="#d9dce0"/>
<path d="M997.500 93 v-8" stroke="#e9ebee" stroke-width="1.100"/><path d="M997.500 83 l-1.600 3 h3.200z" fill="#e9ebee"/>
<path d="M964.500 110 h4.500 l1 1.500 h7 v9.500 h-12.500z" fill="#e8b028"/><rect x="970.300" y="113.300" width="1.400" height="5.500" fill="#fff"/><path d="M962 108 h4.500 v-2 l3.500 3 -3.500 3 v-2 h-4.500z" fill="#4fb0f0"/>
<path d="M1013.0 66.6 l4.6 -4.6 h11.9 l-4.6 4.6 z" fill="#f7f8f9"/><rect x="1013.0" y="66.6" width="11.9" height="11.9" fill="#eef0f2"/><path d="M1024.9 66.6 l4.6 -4.6 v11.9 l-4.6 4.6 z" fill="#b4b9c0"/>
<path d="M1024.5 78.1 l4.6 -4.6 h11.9 l-4.6 4.6 z" fill="#f7f8f9"/><rect x="1024.5" y="78.1" width="11.9" height="11.9" fill="#eef0f2"/><path d="M1036.4 78.1 l4.6 -4.6 v11.9 l-4.6 4.6 z" fill="#b4b9c0"/>
<circle cx="1037" cy="63.500" r="5" fill="#ffd45e"/><rect x="1035.200" y="68" width="3.600" height="2.600" fill="#e9ebee"/>
<path d="M1051.5 62.7 l2.2 -2.2 h5.8 l-2.2 2.2 z" fill="#f7f8f9"/><rect x="1051.5" y="62.7" width="5.8" height="5.8" fill="#eef0f2"/><path d="M1057.3 62.7 l2.2 -2.2 v5.8 l-2.2 2.2 z" fill="#b4b9c0"/>
<path d="M1057.0 68.7 l2.2 -2.2 h5.8 l-2.2 2.2 z" fill="#b4b9c0"/><rect x="1057.0" y="68.7" width="5.8" height="5.8" fill="#b4b9c0"/><path d="M1062.8 68.7 l2.2 -2.2 v5.8 l-2.2 2.2 z" fill="#b4b9c0"/>
<circle cx="1063.700" cy="62" r="2.300" fill="#5ccbe6"/>
<rect x="1075.500" y="61" width="5" height="4.200" fill="#d9dce0"/><rect x="1084" y="61" width="5" height="4.200" fill="#d9dce0"/><path d="M1082.300 66.500 c2 2.500 2.500 3.500 2.500 4.700 a2.500 2.500 0 0 1 -5 0 c0 -1.200 .5 -2.200 2.500 -4.700z" fill="#4fb0f0"/>
<path d="M1051.5 85.7 l2.2 -2.2 h5.8 l-2.2 2.2 z" fill="#f7f8f9"/><rect x="1051.5" y="85.7" width="5.8" height="5.8" fill="#eef0f2"/><path d="M1057.3 85.7 l2.2 -2.2 v5.8 l-2.2 2.2 z" fill="#b4b9c0"/>
<path d="M1058.0 92.4 l2.4 -2.4 h6.1 l-2.4 2.4 z" fill="#4fb0f0"/><rect x="1058.0" y="92.4" width="6.1" height="6.1" fill="#4fb0f0"/><path d="M1064.1 92.4 l2.4 -2.4 v6.1 l-2.4 2.4 z" fill="#4fb0f0"/>
<path d="M1063.500 82 v5" stroke="#e9ebee" stroke-width="1"/><path d="M1063.500 89 l-1.500 -2.500 h3z" fill="#e9ebee"/>
<path d="M1076 88 l4 -1 v5 l-4 -1z M1089.500 88 l-4 -1 v5 l4 -1z" fill="#d9dce0"/><rect x="1080" y="87.800" width="5.500" height="3.600" fill="#f2f3f5"/>
<rect x="1052" y="111" width="6" height="5" fill="#f2f3f5"/><rect x="1059" y="112" width="7" height="3.200" fill="#aab0b9"/>
<rect x="1075" y="110.500" width="4" height="6" fill="#7e8691"/><rect x="1086.500" y="110.500" width="4" height="6" fill="#7e8691"/><rect x="1079" y="112.500" width="7.500" height="2" fill="#7e8691"/><circle cx="1082.700" cy="113.500" r="2.600" fill="#3f86c4"/>
<rect x="1102.200" y="58.700" width="15.400" height="15.400" fill="#000"/><circle cx="1108" cy="68.500" r="3.800" fill="none" stroke="#8a8f98" stroke-width=".8"/><rect x="1109" y="61" width="5.500" height="7.500" fill="none" stroke="#8a8f98" stroke-width=".8"/>
<rect x="1102.800" y="84.500" width="14" height="11" fill="none" stroke="#d9dce0" stroke-width="1.300"/><path d="M1102.800 87.500 h14 M1106.500 87.500 v8" stroke="#d9dce0" stroke-width="1.300"/><rect x="1108.500" y="89.500" width="7" height="5" fill="#9aa1ab"/>
<path d="M1103.500 110.500 v-4 h4 M1114.500 106.500 h4 v4 M1118.500 117 v4 h-4 M1107.500 121 h-4 v-4" fill="none" stroke="#d9dce0" stroke-width="1.200"/><rect x="1105.800" y="108.800" width="10.400" height="9.800" fill="#d9dce0"/><ellipse cx="1111" cy="113.700" rx="3.300" ry="2.800" fill="#4fb0f0"/>
<path d="M1237 81.3 l8.300 -11 h19.200 l-8.300 11z" fill="#dfe2e6"/>
<path d="M1237 76.9 l8.300 -11 h19.200 l-8.300 11z" fill="#3b4453"/>
<path d="M1237 75.3 l8.300 -11 h19.200 l-8.300 11z" fill="#e6e8eb"/>
<path d="M1237 70.9 l8.300 -11 h19.200 l-8.300 11z" fill="#3b4453"/>
<path d="M1237 69.3 l8.300 -11 h19.200 l-8.300 11z" fill="#dfe2e6"/>
<rect x="1256" y="70.500" width="12.500" height="18" rx="1" fill="#f2f3f5"/><rect x="1258" y="73" width="8.500" height="5.500" fill="#4fb0f0"/><path d="M1259 82 h6.500 M1259 85 h6.500" stroke="#4a525e" stroke-width="1"/>
<circle cx="1294.3" cy="66.5" r="4.6" fill="#ffd45e"/><rect x="1292.2" y="70.6" width="4.1" height="3.4" fill="#f2f3f5"/>
<circle cx="1313.2" cy="67.5" r="3.8" fill="#ffd45e"/><path d="M1318.0 67.5 L1319.8 67.5" stroke="#ffd45e" stroke-width="1.100"/><path d="M1316.6 70.9 L1317.9 72.2" stroke="#ffd45e" stroke-width="1.100"/><path d="M1313.2 72.3 L1313.2 74.1" stroke="#ffd45e" stroke-width="1.100"/><path d="M1309.8 70.9 L1308.5 72.2" stroke="#ffd45e" stroke-width="1.100"/><path d="M1308.4 67.5 L1306.6 67.5" stroke="#ffd45e" stroke-width="1.100"/><path d="M1309.8 64.1 L1308.5 62.8" stroke="#ffd45e" stroke-width="1.100"/><path d="M1313.2 62.7 L1313.2 60.9" stroke="#ffd45e" stroke-width="1.100"/><path d="M1316.6 64.1 L1317.9 62.8" stroke="#ffd45e" stroke-width="1.100"/>
<path d="M1325 63 v-3.500 h3.500 M1334.500 59.500 h3.500 v3.500 M1328.500 74.500 h-3.500 v-3.500" fill="none" stroke="#d9dce0" stroke-width="1.100"/><rect x="1327" y="61.500" width="8.500" height="8" fill="#7e8691"/>
<circle cx="1336.0" cy="71.0" r="2.6" fill="#ffd45e"/><path d="M1339.6 71.0 L1341.4 71.0" stroke="#ffd45e" stroke-width="1.100"/><path d="M1338.5 73.5 L1339.8 74.8" stroke="#ffd45e" stroke-width="1.100"/><path d="M1336.0 74.6 L1336.0 76.4" stroke="#ffd45e" stroke-width="1.100"/><path d="M1333.5 73.5 L1332.2 74.8" stroke="#ffd45e" stroke-width="1.100"/><path d="M1332.4 71.0 L1330.6 71.0" stroke="#ffd45e" stroke-width="1.100"/><path d="M1333.5 68.5 L1332.2 67.2" stroke="#ffd45e" stroke-width="1.100"/><path d="M1336.0 67.4 L1336.0 65.6" stroke="#ffd45e" stroke-width="1.100"/><path d="M1338.5 68.5 L1339.8 67.2" stroke="#ffd45e" stroke-width="1.100"/>
<path d="M1350.7 65.3 v-2.8 a2.8 2.8 0 0 1 5.7 0 v1.2" fill="none" stroke="#ffd45e" stroke-width="1.9"/><rect x="1344.9" y="65.3" width="10.2" height="8.0" fill="#ffd45e"/><rect x="1349.3" y="68.4" width="1.4" height="2.9" fill="#3b4453"/>
<rect x="1363.300" y="61.400" width="13.500" height="12.500" fill="#000" stroke="#9aa1ab" stroke-width="1"/>
<path d="M1287.2 89.2 l5.300 -6 h7.800 l-5.300 6z" fill="#d9dce0"/>
<circle cx="1299.3" cy="92.3" r="3.1" fill="#5cd0e0"/><rect x="1297.9" y="95.1" width="2.8" height="2.3" fill="#f2f3f5"/>
<path d="M1310.2 93.2 l5.300 -6 h7.800 l-5.300 6z" fill="#7ec8f8"/><path d="M1310.2 91.5 l5.300 -6 h7.800 l-5.300 6z" fill="#3b4453"/><path d="M1310.2 90.6 l5.300 -6 h7.800 l-5.300 6z" fill="#f1f2f4"/><path d="M1310.2 88.9 l5.300 -6 h7.800 l-5.300 6z" fill="#3b4453"/><path d="M1310.2 88.0 l5.300 -6 h7.800 l-5.300 6z" fill="#d9dce0"/>
<path d="M1325.500 91.300 l-5 4.800" stroke="#e9ebee" stroke-width="1.300"/><path d="M1318.800 97.700 l1 -4.300 3.300 3.300z" fill="#e9ebee"/>
<path d="M1333.6 89.2 l5.300 -6 h7.800 l-5.300 6z" fill="#d9dce0"/>
<path d="M1340.5 93.7 L1348.5 93.7" stroke="#5ccbe6" stroke-width="1.200"/><path d="M1342.5 90.2 L1346.5 97.2" stroke="#5ccbe6" stroke-width="1.200"/><path d="M1346.5 90.2 L1342.5 97.2" stroke="#5ccbe6" stroke-width="1.200"/>
<path d="M1357.0 89.2 l5.300 -6 h7.800 l-5.300 6z" fill="#d9dce0"/>
<path d="M1366.8 92.2 v-1.8 a1.9 1.9 0 0 1 3.7 0 v1.8" fill="none" stroke="#5ccbe6" stroke-width="1.2"/><rect x="1365.4" y="92.2" width="6.6" height="5.2" fill="#5ccbe6"/><rect x="1368.2" y="94.2" width="0.9" height="1.9" fill="#3b4453"/>
<path d="M1380.0 97.7 l5.300 -6 h7.800 l-5.300 6z" fill="#f1f2f4"/><path d="M1380.0 96.0 l5.300 -6 h7.800 l-5.300 6z" fill="#3b4453"/><path d="M1380.0 95.1 l5.300 -6 h7.800 l-5.300 6z" fill="#f1f2f4"/><path d="M1380.0 93.4 l5.300 -6 h7.800 l-5.300 6z" fill="#3b4453"/><path d="M1380.0 92.5 l5.300 -6 h7.800 l-5.300 6z" fill="#7ec8f8"/>
<circle cx="1387.600" cy="85.300" r="3.300" fill="#d9dce0"/>
<path d="M1287.2 117.0 l5.300 -6 h7.800 l-5.300 6z" fill="#f1f2f4"/><path d="M1287.2 115.3 l5.300 -6 h7.800 l-5.300 6z" fill="#3b4453"/><path d="M1287.2 114.4 l5.300 -6 h7.800 l-5.300 6z" fill="#f1f2f4"/><path d="M1287.2 112.7 l5.300 -6 h7.800 l-5.300 6z" fill="#3b4453"/><path d="M1287.2 111.8 l5.300 -6 h7.800 l-5.300 6z" fill="#d9dce0"/>
<circle cx="1299.3" cy="115.3" r="3.1" fill="#ffd45e"/><rect x="1297.9" y="118.1" width="2.8" height="2.3" fill="#f2f3f5"/>
<path d="M1310.2 117.0 l5.300 -6 h7.800 l-5.300 6z" fill="#7ec8f8"/><path d="M1310.2 115.3 l5.300 -6 h7.800 l-5.300 6z" fill="#3b4453"/><path d="M1310.2 114.4 l5.300 -6 h7.800 l-5.300 6z" fill="#f1f2f4"/><path d="M1310.2 112.7 l5.300 -6 h7.800 l-5.300 6z" fill="#3b4453"/><path d="M1310.2 111.8 l5.300 -6 h7.800 l-5.300 6z" fill="#d9dce0"/>
<path d="M1319.300 120.500 l5 -4.800" stroke="#e9ebee" stroke-width="1.300"/><path d="M1326 114.200 l-1 4.300 -3.300 -3.300z" fill="#e9ebee"/>
<path d="M1333.6 117.0 l5.300 -6 h7.800 l-5.300 6z" fill="#f1f2f4"/><path d="M1333.6 115.3 l5.300 -6 h7.800 l-5.300 6z" fill="#3b4453"/><path d="M1333.6 114.4 l5.300 -6 h7.800 l-5.300 6z" fill="#f1f2f4"/><path d="M1333.6 112.7 l5.300 -6 h7.800 l-5.300 6z" fill="#3b4453"/><path d="M1333.6 111.8 l5.300 -6 h7.800 l-5.300 6z" fill="#d9dce0"/>
<circle cx="1344.300" cy="116.700" r="4.600" fill="#3b4453"/>
<circle cx="1344.3" cy="116.7" r="2.5" fill="#ffd45e"/><path d="M1347.8 116.7 L1349.6 116.7" stroke="#ffd45e" stroke-width="1.100"/><path d="M1346.8 119.2 L1348.0 120.4" stroke="#ffd45e" stroke-width="1.100"/><path d="M1344.3 120.2 L1344.3 122.0" stroke="#ffd45e" stroke-width="1.100"/><path d="M1341.8 119.2 L1340.6 120.4" stroke="#ffd45e" stroke-width="1.100"/><path d="M1340.8 116.7 L1339.0 116.7" stroke="#ffd45e" stroke-width="1.100"/><path d="M1341.8 114.2 L1340.6 113.0" stroke="#ffd45e" stroke-width="1.100"/><path d="M1344.3 113.2 L1344.3 111.4" stroke="#ffd45e" stroke-width="1.100"/><path d="M1346.8 114.2 L1348.0 113.0" stroke="#ffd45e" stroke-width="1.100"/>
<path d="M1357.0 112.2 l5.300 -6 h7.800 l-5.300 6z" fill="#d9dce0"/>
<path d="M1367.5 115.7 v-1.8 a1.9 1.9 0 0 1 3.7 0 v0.8" fill="none" stroke="#ffd45e" stroke-width="1.2"/><rect x="1363.7" y="115.7" width="6.6" height="5.2" fill="#ffd45e"/><rect x="1366.5" y="117.7" width="0.9" height="1.9" fill="#3b4453"/>
<path d="M1380.0 117.0 l5.300 -6 h7.800 l-5.300 6z" fill="#f1f2f4"/><path d="M1380.0 115.3 l5.300 -6 h7.800 l-5.300 6z" fill="#3b4453"/><path d="M1380.0 114.4 l5.300 -6 h7.800 l-5.300 6z" fill="#f1f2f4"/><path d="M1380.0 112.7 l5.300 -6 h7.800 l-5.300 6z" fill="#3b4453"/><path d="M1380.0 111.8 l5.300 -6 h7.800 l-5.300 6z" fill="#d9dce0"/>
<path d="M1389.500 116 l4.500 4" stroke="#f0c050" stroke-width="3"/><path d="M1386.800 113.800 l3 2.600" stroke="#e9ebee" stroke-width="3.400"/>
</svg><div class="a canvas">
<svg width="1487" height="640" viewBox="0 176 1487 640" style="left:0;top:0" font-family="'Liberation Sans', sans-serif" stroke-linecap="butt">
<line x1="2.7" y1="175.6" x2="2.7" y2="816.0" stroke="#ffd966" stroke-width="1.8" stroke-dasharray="10.900 4.100" stroke-dashoffset="7"/>
<line x1="28.0" y1="421.0" x2="72.7" y2="421.0" stroke="#000" stroke-width="2"/>
<line x1="72.7" y1="421.0" x2="156.5" y2="421.0" stroke="#8b1a7a" stroke-width="2"/>
<line x1="28.0" y1="437.2" x2="72.7" y2="437.2" stroke="#8b1a7a" stroke-width="2"/>
<line x1="72.7" y1="437.2" x2="156.5" y2="437.2" stroke="#ffb81c" stroke-width="2"/>
<line x1="28.0" y1="420.2" x2="28.0" y2="438.0" stroke="#ffb81c" stroke-width="2"/>
<line x1="72.7" y1="420.2" x2="72.7" y2="438.0" stroke="#000" stroke-width="2"/>
<polygon points="156.300,420.500 165.200,429.300 156.300,438" fill="#000"/>
<line x1="156.3" y1="420.5" x2="165.2" y2="429.3" stroke="#ffb81c" stroke-width="2"/>
<circle cx="50.3" cy="432.8" r="1.300" fill="#000"/>
<circle cx="114.8" cy="432.8" r="1.300" fill="#000"/>
<circle cx="29.9" cy="447.0" r="1.300" fill="#000"/>
<text x="28.5" y="418.3" font-size="12" fill="#000" font-weight="700" textLength="7.8" lengthAdjust="spacingAndGlyphs">P</text>
<line x1="171.0" y1="433.0" x2="241.5" y2="425.5" stroke="#b5a642" stroke-width="2"/>
<polygon points="229.5,428.3 214.8,433.6 214.2,425.1" fill="#000"/>
<line x1="246.5" y1="399.0" x2="358.0" y2="381.0" stroke="#b5a642" stroke-width="2"/>
<line x1="356.4" y1="373.6" x2="467.4" y2="398.5" stroke="#bfff00" stroke-width="2"/>
<line x1="245.3" y1="399.0" x2="467.6" y2="399.0" stroke="#ff0000" stroke-width="2"/>
<line x1="245.3" y1="540.1" x2="467.6" y2="540.1" stroke="#0000ff" stroke-width="2"/>
<line x1="252.3" y1="404.9" x2="245.6" y2="540.0" stroke="#00ffff" stroke-width="2"/>
<line x1="467.4" y1="399.0" x2="462.9" y2="534.0" stroke="#00ff00" stroke-width="2"/>
<line x1="461.8" y1="427.0" x2="485.0" y2="427.0" stroke="#b5a642" stroke-width="2"/>
<text x="313.0" y="466.1" font-size="20.5" fill="#9a0cff" stroke="#9a0cff" stroke-width="0.35" textLength="87.3" lengthAdjust="spacingAndGlyphs">TK-1003</text>
<line x1="310.8" y1="471.6" x2="403.1" y2="471.6" stroke="#b4f3b4" stroke-width="2.2"/>
<line x1="221.8" y1="484.2" x2="296.3" y2="484.2" stroke="#777" stroke-width="1"/>
<line x1="258.9" y1="447.0" x2="258.9" y2="521.6" stroke="#777" stroke-width="1"/>
<rect x="255.900" y="481.200" width="6" height="6" fill="#fff" stroke="#666" stroke-width="1"/>
<path d="M529.7 380.6 A23.1 20.7 0 0 1 575.9 380.6" fill="none" stroke="#5ab4e6" stroke-width="1.8"/>
<path d="M534.2 381.6 A20.6 19.4 0 0 0 575.5 381.6" fill="none" stroke="#d2703c" stroke-width="1.8"/>
<line x1="534.8" y1="381.1" x2="574.0" y2="381.1" stroke="#b03080" stroke-width="2"/>
<text x="542.0" y="372.9" font-size="11.5" fill="#3a5fcd" font-weight="700" textLength="20.8" lengthAdjust="spacingAndGlyphs">LAH</text>
<text x="541.2" y="392.1" font-size="12" fill="#000" font-weight="700" textLength="27.5" lengthAdjust="spacingAndGlyphs">1002</text>
<path d="M584.9 381.0 A20.7 20.0 0 0 1 626.2 381.0" fill="none" stroke="#b347f0" stroke-width="1.8"/>
<path d="M585.4 382.0 A19.0 19.8 0 0 0 623.4 382.0" fill="none" stroke="#f07474" stroke-width="1.8"/>
<line x1="585.7" y1="381.4" x2="625.2" y2="381.4" stroke="#000" stroke-width="2"/>
<text x="598.5" y="379.7" font-size="12" fill="#2e6b4f" font-weight="700" textLength="13.2" lengthAdjust="spacingAndGlyphs">LC</text>
<text x="590.8" y="392.5" font-size="12" fill="#00ffff" font-weight="700" textLength="28.9" lengthAdjust="spacingAndGlyphs">1002</text>
<path d="M486.3 424.5 A20.8 20.1 0 0 1 528.0 424.5" fill="none" stroke="#5030d0" stroke-width="1.8"/>
<line x1="487.2" y1="424.8" x2="528.0" y2="424.8" stroke="#ff7080" stroke-width="2"/>
<path d="M481.200 431.500 C486 441 495 446 505 446 C518 446 527.500 437 528 425.500" fill="none" stroke="#2e6b4f" stroke-width="2"/>
<text x="500.3" y="423.0" font-size="12" fill="#5ab4e6" font-weight="700" textLength="14.1" lengthAdjust="spacingAndGlyphs">LG</text>
<text x="494.8" y="435.8" font-size="12" fill="#3a5fcd" font-weight="700" textLength="28.1" lengthAdjust="spacingAndGlyphs">1002</text>
<path d="M534.2 424.0 A20.9 20.0 0 0 1 576.0 424.0" fill="none" stroke="#b06030" stroke-width="1.8"/>
<line x1="534.2" y1="424.2" x2="576.0" y2="424.2" stroke="#b5a642" stroke-width="2"/>
<path d="M534.800 425 C535.500 437 544.500 445.100 556 445.100 C564 445.100 570 442 574.500 435.500 L577.300 432" fill="none" stroke="#66e030" stroke-width="2"/>
<text x="545.0" y="422.7" font-size="12" fill="#ffb000" font-weight="700" textLength="18.3" lengthAdjust="spacingAndGlyphs">LAL</text>
<text x="548.3" y="437.0" font-size="12" fill="#ff7f7f" font-weight="700" textLength="28.1" lengthAdjust="spacingAndGlyphs">1002</text>
<path d="M585.300 440 C583 430 592 418.800 605.700 418.800 C619.500 418.800 628.500 430 626.200 440" fill="none" stroke="#ff0000" stroke-width="2"/>
<path d="M585.500 446 C587 458 595 466.400 605.700 466.400 C616.500 466.400 624.500 458 626 446" fill="none" stroke="#ff0000" stroke-width="2"/>
<rect x="597.500" y="433" width="17.300" height="10.200" fill="none" stroke="#000" stroke-width="1.900"/>
<line x1="614.3" y1="433.8" x2="614.3" y2="442.5" stroke="#8ccbf2" stroke-width="1.4"/>
<rect x="590.300" y="447" width="32.500" height="10.800" fill="none" stroke="#000" stroke-width="1.900"/>
<line x1="591.0" y1="446.8" x2="622.0" y2="446.8" stroke="#8ccbf2" stroke-width="1.2"/>
<text x="598.5" y="442.6" font-size="12" fill="#ff0000" font-weight="700" textLength="15.3" lengthAdjust="spacingAndGlyphs">CV</text>
<text x="591.7" y="457.0" font-size="12" fill="#ff0000" font-weight="700" textLength="28.8" lengthAdjust="spacingAndGlyphs">1002</text>
<line x1="604.0" y1="403.5" x2="607.0" y2="418.8" stroke="#2e6b4f" stroke-width="1.9"/>
<line x1="589.0" y1="461.3" x2="559.5" y2="507.0" stroke="#3060d0" stroke-width="1.9"/>
<circle cx="554.600" cy="473.200" r="7.100" fill="#fff" stroke="#000" stroke-width="1.900"/>
<text x="549.0" y="476.0" font-size="7" fill="#ff5060" font-weight="700" textLength="11.5" lengthAdjust="spacingAndGlyphs">E/H</text>
<line x1="554.6" y1="480.8" x2="558.5" y2="506.0" stroke="#2e6b4f" stroke-width="1.9"/>
<text x="517.8" y="494.0" font-size="13.5" fill="#ffb81c" font-weight="700" textLength="31.6" lengthAdjust="spacingAndGlyphs">4"x3"</text>
<text x="568.7" y="494.0" font-size="13.5" fill="#000" font-weight="700" textLength="32.5" lengthAdjust="spacingAndGlyphs">3"x4"</text>
<line x1="482.5" y1="509.9" x2="650.0" y2="509.9" stroke="#5ab4f0" stroke-width="2"/>
<polygon points="663.5,509.9 648.0,514.7 648.0,505.1" fill="#000"/>
<line x1="499.1" y1="504.7" x2="519.6" y2="515.0" stroke="#bfff00" stroke-width="1.9"/>
<line x1="499.1" y1="515.0" x2="509.4" y2="509.9" stroke="#8ccbf2" stroke-width="1.9"/>
<line x1="509.4" y1="509.9" x2="519.6" y2="504.7" stroke="#000" stroke-width="1.9"/>
<line x1="499.1" y1="504.2" x2="499.1" y2="515.5" stroke="#000" stroke-width="2"/>
<line x1="519.6" y1="504.2" x2="519.6" y2="515.5" stroke="#a020f0" stroke-width="2"/>
<line x1="528.0" y1="504.7" x2="539.0" y2="506.8" stroke="#a020f0" stroke-width="2"/>
<line x1="528.0" y1="515.0" x2="539.0" y2="512.8" stroke="#b4dbf8" stroke-width="2"/>
<line x1="528.0" y1="504.2" x2="528.0" y2="515.5" stroke="#000" stroke-width="2"/>
<line x1="539.0" y1="506.3" x2="539.0" y2="513.3" stroke="#000" stroke-width="2"/>
<line x1="548.0" y1="504.7" x2="558.5" y2="509.9" stroke="#8ccbf2" stroke-width="1.9"/>
<line x1="548.0" y1="515.0" x2="558.5" y2="509.9" stroke="#000" stroke-width="1.9"/>
<line x1="558.5" y1="509.9" x2="568.7" y2="504.7" stroke="#000" stroke-width="1.9"/>
<line x1="558.5" y1="509.9" x2="568.7" y2="515.0" stroke="#000" stroke-width="1.9"/>
<line x1="548.0" y1="504.2" x2="548.0" y2="515.5" stroke="#000" stroke-width="2"/>
<line x1="568.7" y1="504.2" x2="568.7" y2="515.5" stroke="#b4dbf8" stroke-width="2"/>
<circle cx="558.500" cy="509.800" r="3.900" fill="#ff0000"/>
<line x1="579.1" y1="506.8" x2="589.7" y2="504.7" stroke="#bfff00" stroke-width="2"/>
<line x1="579.1" y1="512.8" x2="589.7" y2="515.0" stroke="#a020f0" stroke-width="2"/>
<line x1="579.1" y1="506.3" x2="579.1" y2="513.3" stroke="#000" stroke-width="2"/>
<line x1="589.7" y1="504.2" x2="589.7" y2="515.5" stroke="#000" stroke-width="2"/>
<line x1="600.2" y1="504.7" x2="620.6" y2="515.0" stroke="#2fb52f" stroke-width="1.9"/>
<line x1="600.2" y1="515.0" x2="620.6" y2="504.7" stroke="#a9d7f5" stroke-width="1.9"/>
<line x1="600.2" y1="504.2" x2="600.2" y2="515.5" stroke="#000" stroke-width="2"/>
<line x1="620.6" y1="504.2" x2="620.6" y2="515.5" stroke="#000" stroke-width="2"/>
<text x="501.8" y="533.9" font-size="13.5" fill="#2e6b4f" font-weight="700" textLength="119.4" lengthAdjust="spacingAndGlyphs">4"-CS300-P-1039</text>
<line x1="493.7" y1="510.0" x2="493.7" y2="576.0" stroke="#00ffff" stroke-width="2"/>
<polygon points="493.7,589.6 488.9,574.1 498.5,574.1" fill="#000"/>
<line x1="509.0" y1="593.8" x2="620.0" y2="590.4" stroke="#ff00ff" stroke-width="2"/>
<polygon points="633.8,590.0 617.9,595.1 617.7,585.9" fill="#000"/>
<line x1="633.6" y1="590.0" x2="633.6" y2="524.0" stroke="#0000ff" stroke-width="2"/>
<polygon points="633.6,510.0 638.4,525.5 628.8,525.5" fill="#000"/>
<polygon points="545.500,585.400 556,590.500 545.500,595.800" fill="#000"/><polygon points="566.500,585 556,590.500 566.500,595.600" fill="#000"/>
<text x="549.5" y="572.5" font-size="13.5" fill="#2e6b4f" font-weight="700" textLength="12.8" lengthAdjust="spacingAndGlyphs">3"</text>
<text x="532.6" y="613.3" font-size="13.5" fill="#ffb81c" font-weight="700" textLength="46.8" lengthAdjust="spacingAndGlyphs">HA-161</text>
<line x1="663.7" y1="192.0" x2="657.3" y2="696.0" stroke="#7272ff" stroke-width="1.9"/>
<polygon points="659,686.300 668.500,686.300 663.800,701.300" fill="#000"/>
<text transform="translate(654.6 236.3) rotate(-90)" font-size="13.5" fill="#000" font-weight="700" textLength="61.0" lengthAdjust="spacingAndGlyphs">4"-CS300</text>
<text x="685.3" y="509.6" font-size="13.5" fill="#a9d1f2" font-weight="700" textLength="119.9" lengthAdjust="spacingAndGlyphs">4"-CS300-P-1040</text>
<line x1="663.8" y1="520.1" x2="912.0" y2="520.1" stroke="#f07a3c" stroke-width="1.9"/>
<polygon points="926.8,520.1 910.8,524.7 910.8,515.5" fill="#000"/>
<line x1="925.0" y1="526.0" x2="927.2" y2="688.0" stroke="#b5a642" stroke-width="1.9"/>
<polygon points="927.1,701.2 922.5,686.2 931.7,686.2" fill="#000"/>
<text x="776.0" y="554.7" font-size="13.5" fill="#f07a3c" font-weight="700" textLength="120.2" lengthAdjust="spacingAndGlyphs">3"-CS300-P-1043</text>
<line x1="810.4" y1="560.0" x2="1040.0" y2="558.3" stroke="#7272ff" stroke-width="1.9"/>
<polygon points="1053.4,560.1 1037.3,564.4 1037.5,555.2" fill="#000"/>
<line x1="663.8" y1="701.5" x2="772.0" y2="701.5" stroke="#ff0000" stroke-width="2"/>
<polygon points="785.7,701.5 769.2,706.1 769.2,696.9" fill="#000"/>
<line x1="785.7" y1="696.5" x2="785.7" y2="706.5" stroke="#000" stroke-width="2"/>
<line x1="785.7" y1="701.5" x2="795.5" y2="701.5" stroke="#44c030" stroke-width="2"/>
<line x1="714.2" y1="696.6" x2="714.2" y2="706.4" stroke="#a020f0" stroke-width="2"/>
<line x1="714.2" y1="696.8" x2="724.3" y2="701.5" stroke="#00ffff" stroke-width="1.9"/>
<line x1="714.2" y1="706.2" x2="724.3" y2="701.5" stroke="#00ffff" stroke-width="1.9"/>
<line x1="724.3" y1="701.5" x2="734.4" y2="696.8" stroke="#a020f0" stroke-width="1.9"/>
<line x1="724.3" y1="701.5" x2="734.4" y2="706.2" stroke="#00ffff" stroke-width="1.9"/>
<line x1="734.4" y1="696.6" x2="734.4" y2="706.4" stroke="#000" stroke-width="2"/>
<text x="718.5" y="683.8" font-size="13.5" fill="#7a0a5e" font-weight="700" textLength="12.7" lengthAdjust="spacingAndGlyphs">4"</text>
<text x="700.5" y="725.0" font-size="13.5" fill="#a9d1f2" font-weight="700" textLength="48.1" lengthAdjust="spacingAndGlyphs">HA-103</text>
<line x1="795.5" y1="682.8" x2="795.5" y2="723.6" stroke="#b5a642" stroke-width="2"/><line x1="825.9" y1="678.7" x2="825.9" y2="723.6" stroke="#bfff00" stroke-width="2"/><path d="M795.8 679.500 C798.5 671 804.5 670.600 810.7 670.600 S822.9 671 825.6 679.500" fill="none" stroke="#ffb81c" stroke-width="2"/><path d="M798.0 723.600 C800.5 730 805.5 731.700 810.7 731.700 S820.9 730 824.4 723.600" fill="none" stroke="#a020f0" stroke-width="2"/>
<line x1="825.9" y1="701.2" x2="840.7" y2="701.2" stroke="#000" stroke-width="2"/>
<line x1="845.7" y1="691.2" x2="882.1" y2="691.2" stroke="#c4f02a" stroke-width="2"/><line x1="845.7" y1="711.7" x2="882.1" y2="711.7" stroke="#98f098" stroke-width="2"/><path d="M846.2 691.2 Q836.2 701.5 846.2 711.7" fill="none" stroke="#6cc0f0" stroke-width="2"/><path d="M881.6 691.2 Q892.1 701.5 881.6 711.7" fill="none" stroke="#2fb52f" stroke-width="2"/><line x1="846.2" y1="691.7" x2="846.2" y2="711.2" stroke="#000" stroke-width="2"/><line x1="881.6" y1="691.7" x2="881.6" y2="711.2" stroke="#000" stroke-width="2"/>
<line x1="810.7" y1="661.0" x2="810.7" y2="670.6" stroke="#000" stroke-width="2"/>
<line x1="810.7" y1="574.0" x2="810.7" y2="661.0" stroke="#e6c01e" stroke-width="2.2"/>
<polygon points="810.5,560.3 815.3,575.8 805.7,575.8" fill="#000"/>
<line x1="805.4" y1="661.3" x2="816.0" y2="661.3" stroke="#6cc0f0" stroke-width="2"/>
<line x1="805.4" y1="580.6" x2="815.8" y2="580.6" stroke="#6cc0f0" stroke-width="2"/>
<line x1="805.4" y1="601.0" x2="815.8" y2="601.0" stroke="#000" stroke-width="2"/>
<line x1="805.6" y1="580.6" x2="810.7" y2="591.0" stroke="#0000ff" stroke-width="1.9"/>
<line x1="815.6" y1="580.6" x2="810.7" y2="591.0" stroke="#a020f0" stroke-width="1.9"/>
<line x1="810.7" y1="591.0" x2="805.6" y2="601.0" stroke="#a020f0" stroke-width="1.9"/>
<line x1="810.7" y1="591.0" x2="815.6" y2="601.0" stroke="#00d040" stroke-width="1.9"/>
<line x1="805.4" y1="630.9" x2="815.8" y2="630.9" stroke="#b347f0" stroke-width="2"/>
<line x1="805.4" y1="651.0" x2="815.8" y2="651.0" stroke="#000" stroke-width="2"/>
<line x1="815.6" y1="631.0" x2="805.6" y2="651.0" stroke="#0000ff" stroke-width="2"/>
<line x1="815.8" y1="631.0" x2="813.5" y2="635.5" stroke="#000" stroke-width="2.2"/>
<text transform="translate(793.7 597.0) rotate(-90)" font-size="14.5" fill="#8ccbf2" font-weight="700" textLength="13.5" lengthAdjust="spacingAndGlyphs">3"</text>
<text transform="translate(793.7 648.0) rotate(-90)" font-size="14.5" fill="#ff7f7f" font-weight="700" textLength="13.5" lengthAdjust="spacingAndGlyphs">3"</text>
<text transform="translate(834.3 616.0) rotate(-90)" font-size="13.5" fill="#ff0000" font-weight="700" textLength="48.7" lengthAdjust="spacingAndGlyphs">HA-114</text>
<text transform="translate(834.3 663.6) rotate(-90)" font-size="13.5" fill="#00f000" font-weight="700" textLength="46.0" lengthAdjust="spacingAndGlyphs">CK-101</text>
<text x="772.1" y="789.3" font-size="20.5" fill="#c83378" stroke="#c83378" stroke-width="0.2" textLength="77.0" lengthAdjust="spacingAndGlyphs">P-1003</text>
<line x1="771.3" y1="794.7" x2="851.1" y2="794.7" stroke="#000" stroke-width="2.2"/>
<line x1="926.5" y1="699.6" x2="1013.0" y2="700.6" stroke="#a020f0" stroke-width="2"/>
<polygon points="1027.4,701.5 1011.3,705.8 1011.5,696.6" fill="#000"/>
<line x1="1027.4" y1="696.5" x2="1027.4" y2="706.5" stroke="#000" stroke-width="2"/>
<line x1="1027.4" y1="701.5" x2="1038.3" y2="701.5" stroke="#000" stroke-width="2"/>
<line x1="967.1" y1="696.6" x2="967.1" y2="706.4" stroke="#b5a642" stroke-width="2"/>
<line x1="967.1" y1="696.8" x2="987.8" y2="706.2" stroke="#ff7f7f" stroke-width="1.9"/>
<line x1="967.1" y1="706.2" x2="987.8" y2="696.8" stroke="#000" stroke-width="1.9"/>
<line x1="987.8" y1="696.6" x2="987.8" y2="706.4" stroke="#6cc0f0" stroke-width="2"/>
<text x="971.0" y="683.8" font-size="13.5" fill="#7a0a5e" font-weight="700" textLength="12.8" lengthAdjust="spacingAndGlyphs">4"</text>
<text x="953.0" y="725.0" font-size="13.5" fill="#b4f01e" font-weight="700" textLength="48.2" lengthAdjust="spacingAndGlyphs">HA-107</text>
<line x1="1038.3" y1="678.7" x2="1038.3" y2="723.6" stroke="#ffee00" stroke-width="2"/><line x1="1068.2" y1="678.7" x2="1068.2" y2="723.6" stroke="#000" stroke-width="2"/><path d="M1038.6 679.500 C1041.3 671 1047.3 670.600 1053.2 670.600 S1065.2 671 1067.9 679.500" fill="none" stroke="#2fb52f" stroke-width="2"/><path d="M1038.6 723.600 C1041.1 730 1048.3 731.700 1053.2 731.700 S1065.4 730 1068.9 723.600" fill="none" stroke="#a6f0a6" stroke-width="2"/>
<line x1="1068.2" y1="701.2" x2="1083.5" y2="701.2" stroke="#6cc0f0" stroke-width="2"/>
<line x1="1088.5" y1="691.2" x2="1123.9" y2="691.2" stroke="#c04af0" stroke-width="2"/><line x1="1088.5" y1="711.7" x2="1123.9" y2="711.7" stroke="#2fb52f" stroke-width="2"/><path d="M1089.0 691.2 Q1079.0 701.5 1089.0 711.7" fill="none" stroke="#ffb81c" stroke-width="2"/><path d="M1123.4 691.2 Q1133.9 701.5 1123.4 711.7" fill="none" stroke="#a6f0a6" stroke-width="2"/><line x1="1089.0" y1="691.7" x2="1089.0" y2="711.2" stroke="#000" stroke-width="2"/><line x1="1123.4" y1="691.7" x2="1123.4" y2="711.2" stroke="#ffee00" stroke-width="2"/>
<line x1="1053.2" y1="661.0" x2="1053.2" y2="670.6" stroke="#000" stroke-width="2"/>
<line x1="1048.0" y1="661.0" x2="1058.5" y2="661.0" stroke="#000" stroke-width="2"/>
<line x1="1053.3" y1="186.4" x2="1053.3" y2="661.0" stroke="#a3d3f5" stroke-width="2.1"/>
<line x1="1048.0" y1="580.6" x2="1058.5" y2="580.6" stroke="#000" stroke-width="2"/>
<line x1="1048.0" y1="600.9" x2="1058.5" y2="600.9" stroke="#000" stroke-width="2"/>
<line x1="1048.2" y1="580.6" x2="1053.3" y2="590.8" stroke="#ff0000" stroke-width="1.9"/>
<line x1="1058.3" y1="580.6" x2="1053.3" y2="590.8" stroke="#e05070" stroke-width="1.9"/>
<line x1="1053.3" y1="590.8" x2="1048.2" y2="600.9" stroke="#b04080" stroke-width="1.9"/>
<line x1="1053.3" y1="590.8" x2="1058.3" y2="600.9" stroke="#6cc0f0" stroke-width="1.9"/>
<line x1="1048.0" y1="630.7" x2="1058.5" y2="630.7" stroke="#000" stroke-width="2"/>
<line x1="1048.0" y1="651.1" x2="1058.5" y2="651.1" stroke="#000" stroke-width="2"/>
<line x1="1058.3" y1="631.0" x2="1048.2" y2="651.0" stroke="#b347f0" stroke-width="2"/>
<text transform="translate(1036.0 596.5) rotate(-90)" font-size="14.5" fill="#2e6b4f" font-weight="700" textLength="13.5" lengthAdjust="spacingAndGlyphs">3"</text>
<text transform="translate(1036.0 647.5) rotate(-90)" font-size="14.5" fill="#000" font-weight="700" textLength="13.5" lengthAdjust="spacingAndGlyphs">3"</text>
<text transform="translate(1077.3 614.2) rotate(-90)" font-size="13.5" fill="#f07a3c" font-weight="700" textLength="46.9" lengthAdjust="spacingAndGlyphs">HA-151</text>
<text transform="translate(1077.3 664.7) rotate(-90)" font-size="13.5" fill="#2fc02f" font-weight="700" textLength="47.4" lengthAdjust="spacingAndGlyphs">CK-102</text>
<text x="1014.2" y="789.3" font-size="20.5" fill="#00ffff" stroke="#00ffff" stroke-width="0.2" textLength="76.6" lengthAdjust="spacingAndGlyphs">P-1004</text>
<line x1="1013.8" y1="794.7" x2="1093.8" y2="794.7" stroke="#000" stroke-width="2.2"/>
<line x1="1053.3" y1="530.0" x2="1115.0" y2="530.0" stroke="#e6c01e" stroke-width="1.9"/>
<polygon points="1129.3,530.0 1113.3,534.6 1113.3,525.4" fill="#000"/>
<line x1="1129.2" y1="322.0" x2="1129.2" y2="530.0" stroke="#5ab4f0" stroke-width="1.9"/>
<text transform="translate(1049.4 383.2) rotate(-90)" font-size="13.5" fill="#2e6b4f" font-weight="700" textLength="120.4" lengthAdjust="spacingAndGlyphs">3"-CS300-P-1042</text>
<text transform="translate(1118.7 504.5) rotate(-90)" font-size="13.5" fill="#5ab4f0" font-weight="700" textLength="119.7" lengthAdjust="spacingAndGlyphs">3"-CS300-P-1044</text>
<line x1="1104.3" y1="231.7" x2="1104.3" y2="307.8" stroke="#000" stroke-width="2"/>
<line x1="1108.9" y1="231.7" x2="1108.9" y2="307.8" stroke="#a6f0a6" stroke-width="2"/>
<line x1="1361.8" y1="231.7" x2="1361.8" y2="307.8" stroke="#000" stroke-width="2"/>
<line x1="1366.3" y1="231.7" x2="1366.3" y2="307.8" stroke="#000" stroke-width="2"/>
<line x1="1108.9" y1="242.2" x2="1149.2" y2="242.2" stroke="#a6f0a6" stroke-width="2"/>
<line x1="1149.2" y1="242.2" x2="1315.5" y2="242.2" stroke="#2e6b4f" stroke-width="2"/>
<line x1="1315.5" y1="242.2" x2="1361.0" y2="242.2" stroke="#000" stroke-width="2"/>
<line x1="1108.9" y1="297.9" x2="1149.2" y2="297.9" stroke="#2e6b4f" stroke-width="2"/>
<line x1="1149.2" y1="297.9" x2="1315.5" y2="297.9" stroke="#ff7070" stroke-width="2"/>
<line x1="1315.5" y1="297.9" x2="1361.0" y2="297.9" stroke="#000" stroke-width="2"/>
<line x1="1154.1" y1="242.2" x2="1154.1" y2="297.9" stroke="#000" stroke-width="1.8" stroke-dasharray="3.500 2"/>
<line x1="1315.5" y1="242.2" x2="1315.5" y2="297.9" stroke="#000" stroke-width="1.8" stroke-dasharray="3.500 2"/>
<line x1="1128.9" y1="231.7" x2="1128.9" y2="242.2" stroke="#000" stroke-width="2"/>
<line x1="1123.9" y1="232.0" x2="1133.9" y2="232.0" stroke="#000" stroke-width="2"/>
<line x1="1174.5" y1="231.7" x2="1174.5" y2="242.2" stroke="#000" stroke-width="2"/>
<line x1="1169.5" y1="232.0" x2="1179.5" y2="232.0" stroke="#000" stroke-width="2"/>
<line x1="1128.9" y1="297.9" x2="1128.9" y2="309.0" stroke="#000" stroke-width="2"/>
<line x1="1123.9" y1="302.8" x2="1133.9" y2="302.8" stroke="#000" stroke-width="2"/>
<polygon points="1128.9,307.6 1133.5,322.6 1124.3,322.6" fill="#000"/>
<line x1="1295.8" y1="297.9" x2="1295.8" y2="309.0" stroke="#000" stroke-width="2"/>
<line x1="1290.8" y1="302.8" x2="1300.8" y2="302.8" stroke="#000" stroke-width="2"/>
<polygon points="1295.8,307.6 1300.4,322.6 1291.2,322.6" fill="#000"/>
<polygon points="1173.8,176.0 1178.6,191.3 1169.0,191.3" fill="#000"/>
<polygon points="1294.5,345.5 1311.5,340.7 1311.5,350.3" fill="#000"/>
<text x="1198.7" y="280.1" font-size="21.7" fill="#000" stroke="#000" stroke-width="0.3" textLength="72.6" lengthAdjust="spacingAndGlyphs">E-1001</text>
<line x1="1198.1" y1="285.1" x2="1272.9" y2="285.1" stroke="#000" stroke-width="2"/>
<text x="1380.6" y="338.0" font-size="13.5" fill="#000" font-weight="700" textLength="104.4" lengthAdjust="spacingAndGlyphs">4"-CS300-P-10</text>
<line x1="1123.8" y1="333.0" x2="1134.0" y2="333.0" stroke="#000" stroke-width="2"/>
<line x1="1123.8" y1="353.7" x2="1134.0" y2="353.7" stroke="#000" stroke-width="2"/>
<line x1="1124.0" y1="333.0" x2="1128.9" y2="343.3" stroke="#ff6060" stroke-width="1.9"/>
<line x1="1133.8" y1="333.0" x2="1128.9" y2="343.3" stroke="#000" stroke-width="1.9"/>
<line x1="1128.9" y1="343.3" x2="1124.0" y2="353.7" stroke="#a6f0a6" stroke-width="1.9"/>
<line x1="1128.9" y1="343.3" x2="1133.8" y2="353.7" stroke="#000" stroke-width="1.9"/>
<text transform="translate(1112.3 349.0) rotate(-90)" font-size="14.5" fill="#2e6b4f" font-weight="700" textLength="13.5" lengthAdjust="spacingAndGlyphs">3"</text>
<text transform="translate(1153.3 367.4) rotate(-90)" font-size="13.5" fill="#a6f0a6" textLength="47.2" lengthAdjust="spacingAndGlyphs">HA-158</text>
<circle cx="1413.900" cy="270" r="46.500" fill="none" stroke="#000" stroke-opacity=".022" stroke-width="10"/>
<rect x="1390.300" y="247" width="47.500" height="47" fill="#f1f2f3" stroke="#cfcfcf" stroke-width="1"/><rect x="1399.500" y="257" width="28.500" height="27.800" fill="#e3e7e9"/>
<text x="1404.5" y="274.8" font-size="11" fill="#9097a0" stroke="#9097a0" stroke-width="0.3" textLength="19.0" lengthAdjust="spacingAndGlyphs">TOP</text>
<text x="1407.3" y="226.8" font-size="17" font-weight="700" fill="#000" fill-opacity=".075" stroke="#000" stroke-opacity=".26" stroke-width=".8">N</text>
<text x="1407.8" y="327.5" font-size="17" font-weight="700" fill="#000" fill-opacity=".075" stroke="#000" stroke-opacity=".26" stroke-width=".8">S</text>
<text x="1355.0" y="276.0" font-size="17" font-weight="700" fill="#000" fill-opacity=".075" stroke="#000" stroke-opacity=".26" stroke-width=".8">W</text>
<text x="1459.7" y="276.0" font-size="17" font-weight="700" fill="#000" fill-opacity=".075" stroke="#000" stroke-opacity=".26" stroke-width=".8">E</text>
<rect x="1392" y="349.700" width="44.200" height="15.300" rx="2.500" fill="#ebebf6"/><path d="M1424.500 354.500 h7 l-3.500 5z" fill="none" stroke="#c4c4d0" stroke-width="1"/>
<text x="1396.0" y="361.3" font-size="10.5" fill="#9a9aa4" textLength="21.5" lengthAdjust="spacingAndGlyphs">WCS</text>
<rect x="1431.600" y="188.300" width="11.500" height="3.400" rx="1" fill="#e6e6e6" stroke="#7a7a7a" stroke-width="1"/>
<rect x="1454" y="181.800" width="8.500" height="8.500" rx="1" fill="#e6e6e6" stroke="#7a7a7a" stroke-width="1"/><rect x="1451.500" y="184.300" width="8.500" height="8.800" rx="1" fill="#e6e6e6" stroke="#7a7a7a" stroke-width="1"/><rect x="1454.300" y="187.300" width="3" height="3" fill="#9a9a9a" stroke="#6a6a6a" stroke-width=".6"/>
<path d="M1471.300 184.300 l9 8 M1480.300 184.300 l-9 8" stroke="#6f6f6f" stroke-width="3.400"/><path d="M1471.300 184.300 l9 8 M1480.300 184.300 l-9 8" stroke="#e6e6e6" stroke-width="1.500"/>
<line x1="16.9" y1="751.0" x2="16.9" y2="798.8" stroke="#666" stroke-width="1"/>
<line x1="16.9" y1="798.8" x2="65.3" y2="798.8" stroke="#666" stroke-width="1"/>
<rect x="12.900" y="794.500" width="8.600" height="8.600" fill="none" stroke="#555" stroke-width="1"/>
<path d="M17.500 737 l6.200 6.500 l6.200 -6.500 M23.700 743.500 v6" stroke="#666" stroke-width="1" fill="none"/>
<path d="M67.500 787 l11 11.500 M78.500 787 l-11 11.500" stroke="#666" stroke-width="1"/>
</svg>
<span class="t" style="left:1.8px;top:4.7px;font-size:12px;color:#222;">[</span>
<span class="t" style="left:4.8px;top:2.5px;font-size:13px;color:#222;">+</span>
<span class="t" style="left:11.8px;top:4.7px;font-size:12px;color:#222;">][Top][2D Wireframe]</span>
</div><div class="a below"></div>
<div class="a cmdleft"></div><div class="a cmd"></div>
<div class="a statusbg"></div>
<i class="sb" style="left:2.0px;width:850.4px"></i>
<i class="sb" style="left:859.8px;width:46.6px"></i>
<i class="sb" style="left:908.6px;width:62.1px"></i>
<i class="sb" style="left:973.0px;width:99.9px"></i>
<i class="sb" style="left:1075.0px;width:61.0px"></i>
<i class="sb" style="left:1138.5px;width:173.5px"></i>
<i class="sb" style="left:1314.5px;width:37.9px"></i>
<i class="sb" style="left:1354.8px;width:21.8px"></i>
<i class="sb" style="left:1379.0px;width:24.0px"></i>
<i class="sb" style="left:1405.4px;width:30.0px"></i>
<i class="sb" style="left:1437.8px;width:23.8px"></i>
<i class="sb" style="left:1464.0px;width:22.5px"></i>
<span class="t" style="left:91.4px;top:829.9px;font-size:11.5px;color:#8a8a8a;font-style:italic;font-family:"Liberation Mono", monospace;letter-spacing:0.68px;">Type a command</span>
<span class="t" style="left:863.5px;top:863.5px;font-size:11px;color:#ffffff;letter-spacing:0.09px;">MODEL</span>
<span class="t" style="left:1259.0px;top:863.3px;font-size:11px;color:#7d8591;letter-spacing:-0.40px;">1:1</span>
<svg width="1488" height="70" viewBox="0 815 1488 70" style="left:0;top:815px">
<rect x="4.6" y="827.5" width="1.300" height="1.500" fill="#aab0b9"/>
<rect x="7.6" y="827.5" width="1.300" height="1.500" fill="#aab0b9"/>
<rect x="4.6" y="830.5" width="1.300" height="1.500" fill="#aab0b9"/>
<rect x="7.6" y="830.5" width="1.300" height="1.500" fill="#aab0b9"/>
<rect x="4.6" y="833.5" width="1.300" height="1.500" fill="#aab0b9"/>
<rect x="7.6" y="833.5" width="1.300" height="1.500" fill="#aab0b9"/>
<rect x="4.6" y="836.5" width="1.300" height="1.500" fill="#aab0b9"/>
<rect x="7.6" y="836.5" width="1.300" height="1.500" fill="#aab0b9"/>
<rect x="4.6" y="839.5" width="1.300" height="1.500" fill="#aab0b9"/>
<rect x="7.6" y="839.5" width="1.300" height="1.500" fill="#aab0b9"/>
<rect x="4.6" y="842.5" width="1.300" height="1.500" fill="#aab0b9"/>
<rect x="7.6" y="842.5" width="1.300" height="1.500" fill="#aab0b9"/>
<path d="M15.800 831.800 l7.400 7.600 M23.200 831.800 l-7.400 7.600" stroke="#fff" stroke-width="2"/>
<path d="M36.500 841.500 l8.500 -8.500" stroke="#d9dce0" stroke-width="3" stroke-linecap="round"/><path d="M49.800 830.300 a4.300 4.300 0 1 1 -3.600 -2.700 l-2 2.900 1.500 2.200 2.700 -.2z" fill="#d9dce0"/>
<rect x="60.200" y="829.300" width="14" height="11.400" fill="#f1f1f1" stroke="#555" stroke-width="1.200"/><rect x="60.200" y="829.300" width="14" height="2.600" fill="#555"/><path d="M62.500 834.300 l2.500 1.700 -2.500 1.700 M66 838.300 h3.500" stroke="#444" stroke-width="1" fill="none"/>
<path d="M80.600 838 l-3.300 -4 h6.600z" fill="#666"/>
<path d="M916.0 861.400 v13.400 M913 864.2 h14" stroke="#e9ebee" stroke-width="1.300"/>
<path d="M920.0 861.400 v13.400 M913 868.2 h14" stroke="#e9ebee" stroke-width="1.300"/>
<path d="M924.0 861.400 v13.400 M913 872.2 h14" stroke="#e9ebee" stroke-width="1.300"/>
<rect x="937.5" y="862.5" width="1.800" height="1.800" fill="#e9ebee"/>
<rect x="942.8" y="862.5" width="1.800" height="1.800" fill="#e9ebee"/>
<rect x="948.1" y="862.5" width="1.800" height="1.800" fill="#e9ebee"/>
<rect x="937.5" y="867.3" width="1.800" height="1.800" fill="#e9ebee"/>
<rect x="942.8" y="867.3" width="1.800" height="1.800" fill="#e9ebee"/>
<rect x="948.1" y="867.3" width="1.800" height="1.800" fill="#e9ebee"/>
<rect x="937.5" y="872.1" width="1.800" height="1.800" fill="#e9ebee"/>
<rect x="942.8" y="872.1" width="1.800" height="1.800" fill="#e9ebee"/>
<rect x="948.1" y="872.1" width="1.800" height="1.800" fill="#e9ebee"/>
<path d="M962.9 870.6 l-3.700 -4.300 h7.400z" fill="#e9ebee"/>
<path d="M978.200 860.700 v14.300 h13.800 M978.200 870.300 h4.600 v4.700" fill="none" stroke="#e9ebee" stroke-width="1.300"/>
<circle cx="1007.400" cy="868.500" r="6.200" fill="none" stroke="#e9ebee" stroke-width="1.300"/><path d="M1007.400 868.500 h8.500 M1007.400 868.500 l6.500 -8" stroke="#e9ebee" stroke-width="1.300"/>
<path d="M1027.4 870.6 l-3.700 -4.300 h7.400z" fill="#e9ebee"/>
<path d="M1046.300 860.500 v14.500" stroke="#3fc06a" stroke-width="1.400"/><path d="M1040.300 861.500 l12.500 12.500" stroke="#e0485c" stroke-width="1.400"/><circle cx="1046.300" cy="867.700" r="1.300" fill="none" stroke="#e9ebee" stroke-width=".8"/>
<path d="M1065.8 870.6 l-3.700 -4.300 h7.400z" fill="#e9ebee"/>
<path d="M1093.500 860.800 l-14.500 13.400 h15" fill="none" stroke="#e9ebee" stroke-width="1.300"/><circle cx="1085.300" cy="868.300" r="1.400" fill="#e9ebee"/>
<rect x="1104.500" y="863.300" width="12.700" height="11.700" fill="none" stroke="#e9ebee" stroke-width="1.300"/><rect x="1102" y="860.800" width="4.600" height="4.600" fill="#3b4453" stroke="#f0a04a" stroke-width="1.200"/>
<path d="M1128.3 870.6 l-3.700 -4.300 h7.400z" fill="#e9ebee"/>
<rect x="1143.500" y="860.800" width="15" height="14" fill="none" stroke="#e9ebee" stroke-width="1.200" stroke-dasharray="3 1.800"/><rect x="1147.300" y="864.800" width="7.500" height="6.600" fill="none" stroke="#e9ebee" stroke-width="1.200"/><path d="M1143.500 860.800 l3.500 3.500" stroke="#e9ebee" stroke-width="1.200"/>
<path d="M1172.5 861 l2 8.500 5 5.500 -5 -2.500 -2 2.500 -2 -2.500 -5 2.500 5 -5.500z" fill="#e9ebee"/>
<circle cx="1179.300" cy="862.800" r="2" fill="none" stroke="#e9ebee" stroke-width="1"/>
<path d="M1195.5 861 l2 8.500 5 5.500 -5 -2.500 -2 2.500 -2 -2.500 -5 2.500 5 -5.500z" fill="#e9ebee"/>
<path d="M1203.500 860 l-2.500 4 h2 l-1 3 3 -4.300 h-2z" fill="#e9ebee"/>
<path d="M1216.500 867 v-2.500 a4 4 0 0 1 8 0 v2.500" fill="none" stroke="#4fb0f0" stroke-width="2"/><rect x="1213.700" y="866.800" width="13.700" height="9.500" rx="1" fill="#4fb0f0"/><rect x="1219.900" y="869.800" width="1.400" height="3.500" fill="#fff"/>
<path d="M1237 864.500 v-3.500 h4 M1245.500 861 h4 v3.500 M1249.500 871.500 v3.500 h-1.500" fill="none" stroke="#7d8591" stroke-width="1.200"/><rect x="1237" y="868" width="7.500" height="7" fill="none" stroke="#7d8591" stroke-width="1.200"/>
<path d="M1279.7 870.1 l-3.700 -4.300 h7.400z" fill="#7d8591"/>
<path d="M1291.500 864.500 v-3.500 h4 M1304 861 h4 v3.500 M1291.500 871.500 v3.500 h4" fill="none" stroke="#e9ebee" stroke-width="1.200"/><rect x="1294.200" y="863.300" width="10.500" height="8.500" fill="none" stroke="#e9ebee" stroke-width="1.200"/><path d="M1303 864 l1.500 6 3.500 5 -3.500 -2 -1.500 2 -1.500 -2 -3.500 2 3.500 -5z" fill="#e9ebee"/>
<path d="M1328.4 868.0 L1331.7 868.0" stroke="#e9ebee" stroke-width="3.200"/><path d="M1327.2 870.8 L1329.6 873.2" stroke="#e9ebee" stroke-width="3.200"/><path d="M1324.4 872.0 L1324.4 875.3" stroke="#e9ebee" stroke-width="3.200"/><path d="M1321.6 870.8 L1319.2 873.2" stroke="#e9ebee" stroke-width="3.200"/><path d="M1320.4 868.0 L1317.1 868.0" stroke="#e9ebee" stroke-width="3.200"/><path d="M1321.6 865.2 L1319.2 862.8" stroke="#e9ebee" stroke-width="3.200"/><path d="M1324.4 864.0 L1324.4 860.7" stroke="#e9ebee" stroke-width="3.200"/><path d="M1327.2 865.2 L1329.6 862.8" stroke="#e9ebee" stroke-width="3.200"/><circle cx="1324.400" cy="868" r="4" fill="none" stroke="#e9ebee" stroke-width="3"/>
<path d="M1344.0 870.6 l-3.700 -4.300 h7.400z" fill="#e9ebee"/>
<path d="M1356.500 868 h16.500 M1364.700 859.800 v16.500" stroke="#e9ebee" stroke-width="2"/>
<rect x="1382" y="860.500" width="6.500" height="6.500" fill="none" stroke="#e9ebee" stroke-width="1.200"/><circle cx="1394.500" cy="866.500" r="3" fill="none" stroke="#e9ebee" stroke-width="1.200"/><path d="M1385 876 l3.300 -5.500 3.300 5.500z" fill="none" stroke="#e9ebee" stroke-width="1.200"/>
<path d="M1410 859 h14 l4.500 4.500 v10 h-18.500z" fill="#2f6fb4"/><path d="M1424 859 l4.500 4.500 h-4.500z" fill="#79b4ea"/><path d="M1409 870 h10 l-2.500 3.500 2.500 3.500 h-10z" fill="#f1b530"/><circle cx="1413.300" cy="862.800" r="3" fill="none" stroke="#fff" stroke-width="1.200"/><path d="M1413.300 857.500 v11 M1408 862.800 h11" stroke="#fff" stroke-width="1"/><path d="M1420.500 874.500 l3.500 4 7 -8" fill="none" stroke="#3fc04a" stroke-width="2.800"/>
<rect x="1442.200" y="862.500" width="14.600" height="11.600" fill="none" stroke="#e9ebee" stroke-width="1.300"/><path d="M1445 871.500 l3 -3 M1445 871.500 v-2.600 M1445 871.500 h2.600 M1454 865 l-3 3 M1454 865 v2.600 M1454 865 h-2.600" stroke="#e9ebee" stroke-width="1.100"/>
<path d="M1465.800 861.800 h16.700 M1465.800 867.800 h16.700 M1465.800 873.800 h16.700" stroke="#e9ebee" stroke-width="2"/>
</svg>
</body></html>
